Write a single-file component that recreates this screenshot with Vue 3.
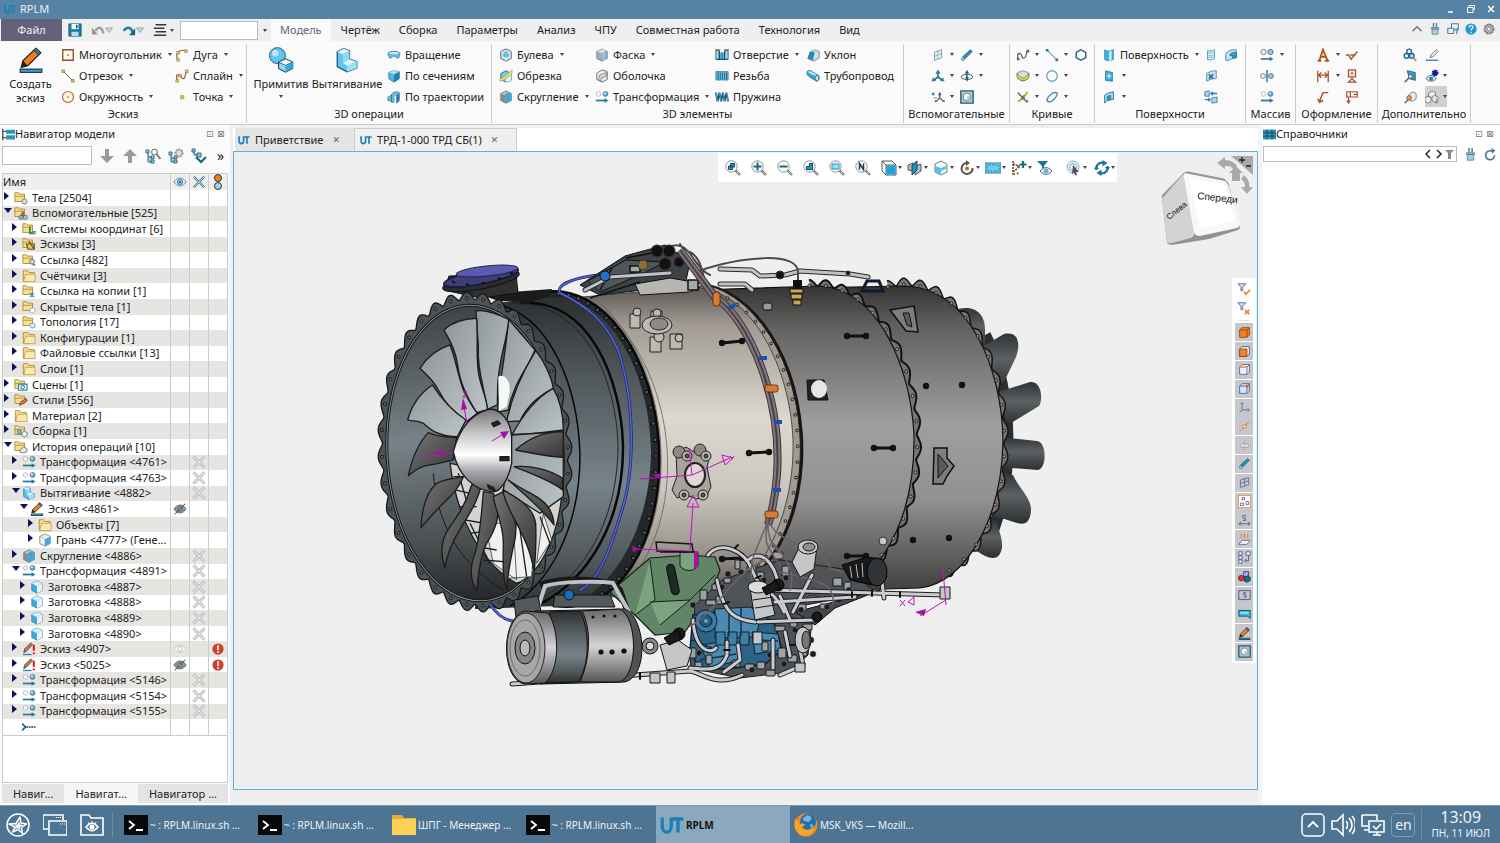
<script setup>
import { ref } from 'vue'

const menuTabs = ['Модель', 'Чертёж', 'Сборка', 'Параметры', 'Анализ', 'ЧПУ', 'Совместная работа', 'Технология', 'Вид']
const activeMenu = ref('Модель')
const command = ref('')
const treeSearch = ref('')
const refSearch = ref('')

const groups = [
  {
    title: 'Эскиз', size: 'g-sketch',
    big: [{ icon: 'pencil', label: 'Создать эскиз' }],
    cols: [
      [['polygon', 'Многоугольник', 1], ['segment', 'Отрезок', 1], ['circle', 'Окружность', 1]],
      [['arc', 'Дуга', 1], ['spline', 'Сплайн', 1], ['point', 'Точка', 1]]
    ]
  },
  {
    title: '3D операции', size: 'g-ops',
    big: [{ icon: 'primitive', label: 'Примитив', arrow: true }, { icon: 'extrude', label: 'Вытягивание' }],
    cols: [[['revolve', 'Вращение'], ['loft', 'По сечениям'], ['sweep', 'По траектории']]]
  },
  {
    title: '3D элементы', size: 'g-elems',
    cols: [
      [['boolean', 'Булева', 1], ['trim', 'Обрезка'], ['fillet', 'Скругление', 1]],
      [['chamfer', 'Фаска', 1], ['shell', 'Оболочка'], ['transform', 'Трансформация', 1]],
      [['hole', 'Отверстие', 1], ['thread', 'Резьба'], ['spring', 'Пружина']],
      [['draft', 'Уклон'], ['pipe', 'Трубопровод'], null]
    ]
  },
  {
    title: 'Вспомогательные', size: 'g-aux',
    cols: [
      [['plane', '', 1], ['csys', '', 1], ['csys2', '', 1]],
      [['axis', '', 1], ['rotaxis', '', 1], ['boxframe', '']]
    ]
  },
  {
    title: 'Кривые', size: 'g-curves',
    cols: [
      [['curve', '', 1], ['envelope', '', 1], ['cross', '', 1]],
      [['line', '', 1], ['circ', '', 1], ['ellipse', '', 1]],
      [['hexagon', ''], null, null]
    ]
  },
  {
    title: 'Поверхности', size: 'g-surf',
    cols: [
      [['surface', 'Поверхность', 1], ['surfplus', '', 1], ['surfoff', '', 1]],
      [['sheet', ''], ['sheetx', ''], ['swap', '']],
      [['sheets', ''], null, null]
    ]
  },
  { title: 'Массив', size: 'g-array', cols: [[['array', '', 1], ['mirror', ''], ['transform', '']]] },
  {
    title: 'Оформление', size: 'g-annot',
    cols: [
      [['letter', '', 1], ['dimension', '', 1], ['leader', '']],
      [['rough', ''], ['datum', ''], ['frame', '']]
    ]
  },
  {
    title: 'Дополнительно', size: 'g-extra',
    cols: [
      [['measure', ''], ['probe', ''], ['probebox', '']],
      [['pen', ''], ['eyegear', '', 1], ['cubes', '', 1, 1]]
    ]
  }
]

// [level, state, icon, text, eye, cross, alert]
const tree = [
  [0, 'closed', 'f-body', 'Тела [2504]'],
  [0, 'open', 'f-aux', 'Вспомогательные [525]'],
  [1, 'closed', 'f-csys', 'Системы координат [6]'],
  [1, 'closed', 'f-sketch', 'Эскизы [3]'],
  [1, 'closed', 'f-link', 'Ссылка [482]'],
  [1, 'closed', 'folder', 'Счётчики [3]'],
  [1, 'closed', 'f-copy', 'Ссылка на копии [1]'],
  [1, 'closed', 'f-hidden', 'Скрытые тела [1]'],
  [1, 'closed', 'f-topo', 'Топология [17]'],
  [1, 'closed', 'folder', 'Конфигурации [1]'],
  [1, 'closed', 'folder', 'Файловые ссылки [13]'],
  [1, 'closed', 'folder', 'Слои [1]'],
  [0, 'closed', 'f-scene', 'Сцены [1]'],
  [0, 'closed', 'f-style', 'Стили [556]'],
  [0, 'closed', 'folder', 'Материал [2]'],
  [0, 'closed', 'f-asm', 'Сборка [1]'],
  [0, 'open', 'f-hist', 'История операций [10]'],
  [1, 'closed', 'transform', 'Трансформация <4761>', '', true],
  [1, 'closed', 'transform', 'Трансформация <4763>', '', true],
  [1, 'open', 'extrude', 'Вытягивание <4882>', '', true],
  [2, 'open', 'pencil', 'Эскиз <4861>', 'eye-off'],
  [3, 'closed', 'folder', 'Объекты [7]'],
  [3, 'closed', 'face', 'Грань <4777> (Гене...'],
  [1, 'closed', 'fillet', 'Скругление <4886>', '', true],
  [1, 'open', 'transform', 'Трансформация <4891>', '', true],
  [2, 'closed', 'cube', 'Заготовка <4887>', '', true],
  [2, 'closed', 'cube', 'Заготовка <4888>', '', true],
  [2, 'closed', 'cube', 'Заготовка <4889>', '', true],
  [2, 'closed', 'cube', 'Заготовка <4890>', '', true],
  [1, 'closed', 'pencil-err', 'Эскиз <4907>', 'eye-pale', false, true],
  [1, 'closed', 'pencil-err', 'Эскиз <5025>', 'eye-off', false, true],
  [1, 'closed', 'transform', 'Трансформация <5146>', '', true],
  [1, 'closed', 'transform', 'Трансформация <5154>', '', true],
  [1, 'closed', 'transform', 'Трансформация <5155>', '', true],
  [1, '', 'tail', '']
]

const viewTools = [
  ['z-all', 0], ['z-in', 0], ['z-out', 0], ['z-part', 0], ['z-rect', 0], ['z-n', 0], ['v-box', 1], ['v-section', 1],
  ['v-shade', 1], ['v-rotate', 1], ['v-select', 1], ['v-graph', 1], ['v-filter', 0], ['v-pick', 2], ['v-sync', 1]
]

const filters = [
  's-body', 's-face', 's-edge', 's-vertex', 's-csys', 's-point', 's-axis', 'axis', 's-plane', 's-group',
  's-dim', 's-proj', 's-array', 's-solids', 's-num', 's-note', 'pencil', 'boxframe'
]

const tasks = [
  ['terminal', '~ : RPLM.linux.sh ...'],
  ['terminal', '~ : RPLM.linux.sh ...'],
  ['files', 'ШПГ - Менеджер ...'],
  ['terminal', '~ : RPLM.linux.sh ...'],
  ['ut', 'RPLM', true],
  ['firefox', 'MSK_VKS — Mozill...']
]

function pointAt (e, deg, k = 1) {
  const t = deg * Math.PI / 180
  const a = e.tilt * Math.PI / 180
  const x = e.rx * k * Math.cos(t)
  const y = e.ry * k * Math.sin(t)
  return [e.cx + x * Math.cos(a) - y * Math.sin(a), e.cy + x * Math.sin(a) + y * Math.cos(a)]
}

// wavy edge of a flange between two angles
function wave (e, from, to, teeth, depth) {
  const pts = []
  for (let d = from; d <= to; d += 0.75) {
    const ph = (d - from) / 360 * teeth * Math.PI
    const k = 1 + depth * (Math.pow(Math.abs(Math.cos(ph)), 1.3) - 0.6)
    pts.push(pointAt(e, d, k).map(v => v.toFixed(1)).join(' '))
  }
  return 'M' + pts.join('L')
}

function bolts (e, from, to, step, k) {
  const out = []
  for (let d = from; d <= to; d += step) out.push(pointAt(e, d, k))
  return out
}

const front = { cx: 475, cy: 452, rx: 95, ry: 157, tilt: -3 }
const second = { cx: 561, cy: 449, rx: 96, ry: 158, tilt: -4 }
const third = { cx: 699, cy: 440, rx: 102, ry: 157, tilt: -4 }
const fourth = { cx: 823, cy: 433, rx: 96, ry: 151, tilt: -4 }
const fifth = { cx: 911, cy: 432, rx: 95, ry: 151, tilt: -4 }

const frontEdge = wave(front, 0, 360, 36, 0.05) + 'Z'
const fourthEdge = wave(fourth, -92, 70, 36, 0.045)
const fifthEdge = wave(fifth, -98, 80, 36, 0.05)
const frontBolts = bolts(front, 0, 355, 10, 0.98)
const secondBolts = bolts(second, -85, 75, 6, 0.985)
const thirdBolts = bolts(third, -85, 60, 6, 0.965)
const fourthBolts = bolts(fourth, -92, 68, 10, 0.98)
const fifthBolts = bolts(fifth, -98, 78, 10, 0.98)

// small fittings between the fuel lines: x, y, width, height
const fittings = [
  [700, 590, 7, 10], [712, 584, 9, 6], [706, 600, 10, 5], [716, 596, 6, 8], [724, 578, 7, 5], [735, 560, 5, 9],
  [747, 566, 9, 5], [757, 572, 7, 7], [782, 566, 7, 10], [773, 552, 10, 7], [797, 604, 9, 7], [808, 596, 10, 5],
  [820, 604, 9, 5], [833, 578, 9, 8], [844, 582, 7, 9], [775, 626, 10, 5], [790, 618, 7, 9], [803, 624, 9, 6],
  [762, 642, 6, 9], [778, 648, 8, 10], [788, 655, 9, 7], [800, 648, 7, 8], [732, 660, 8, 7], [745, 664, 9, 6],
  [757, 662, 8, 7], [766, 670, 9, 6], [688, 648, 8, 10], [695, 662, 7, 7], [682, 654, 7, 8], [706, 655, 6, 9]
]
const dots = [
  [722, 587], [741, 572], [764, 580], [786, 578], [801, 610], [827, 607], [839, 600], [795, 630], [811, 640],
  [770, 655], [784, 664], [752, 670], [699, 653], [676, 664], [728, 574], [849, 590], [813, 654], [693, 605]
]
</script>

<template>
  <svg class="defs" aria-hidden="true">
    <symbol id="pencil" viewBox="0 0 16 16"><path d="M1 14.6h14" stroke="#111" stroke-width="2.6" /><path d="M1.5 14.6h13" stroke="#29a5dc" stroke-width="1.4" /><path d="M2 12.5l1-4L11 .8l3 2.8L6 11.5z" fill="#f27d1c" stroke="#222" stroke-width=".8" /><path d="M2 12.5l1-4 3 3z" fill="#222" /><path d="M9.7 2L11 .8l3 2.8-1.3 1.2z" fill="#258db9" stroke="#222" stroke-width=".6" /></symbol>
    <symbol id="pencil-err" viewBox="0 0 16 16"><path d="M1 14.3h10" stroke="#2f88ad" stroke-width="1.6" /><path d="M2 12l1-4 7-7 2 2-7 7.5z" fill="#d27a45" stroke="#444" /><path d="M13.5 3v7M13.5 12v2" stroke="#e01818" stroke-width="2.4" /></symbol>
    <symbol id="polygon" viewBox="0 0 16 16"><path d="M2 2h12v12H2z" fill="#fff8ed" stroke="#8a4d2b" stroke-width="1.5" /><path d="M7 7h2v2H7z" fill="#92a527" /></symbol>
    <symbol id="segment" viewBox="0 0 16 16"><path d="M2 2l12 12" stroke="#604937" stroke-width="1.1" /><path d="M1 1h3v3H1zM12 12h3v3h-3z" fill="#d7ba59" stroke="#7b6731" stroke-width=".6" /></symbol>
    <symbol id="circle" viewBox="0 0 16 16"><circle cx="8" cy="8" r="6.3" fill="#fff5e8" stroke="#b5683b" stroke-width="1.4" /><path d="M7 7h2v2H7z" fill="#92a527" /></symbol>
    <symbol id="arc" viewBox="0 0 16 16"><path d="M3 13C0 7 4 1 12 3" fill="none" stroke="#99612e" stroke-width="1.4" /><path d="M2 12h3v3H2zM11 2h3v3h-3zM2 4h3v3H2z" fill="#e5cc70" stroke="#7b6731" stroke-width=".6" /></symbol>
    <symbol id="spline" viewBox="0 0 16 16"><path d="M2 13V7h4c2 0 1 5 4 4s0-6 4-8" fill="none" stroke="#99612e" stroke-width="1.4" /><path d="M1 12h3v3H1zM4 6h3v3H4zM12 1h3v3h-3z" fill="#e5cc70" stroke="#7b6731" stroke-width=".6" /></symbol>
    <symbol id="point" viewBox="0 0 16 16"><path d="M6.500 6.500h3.500v3.500H6.500z" fill="#d6cf6d" stroke="#8f8a36" stroke-width=".8" /></symbol>
    <symbol id="primitive" viewBox="0 0 16 16"><circle cx="5.800" cy="5.300" r="4.900" fill="#5ec5f2" stroke="#265a70" stroke-width=".6" /><circle cx="4.500" cy="3.800" r="2" fill="#bfe9fb" /><path d="M6.500 9.300l4.300-2 4.400 2v4l-4.400 2.200-4.300-2.200z" fill="#8ed8f8" stroke="#222" stroke-width=".6" /><path d="M6.500 9.300l4.300 2 4.400-2-4.400-2z" fill="#eaf8fe" stroke="#222" stroke-width=".4" /><path d="M10.800 11.300v4.200l4.400-2.200v-4z" fill="#32a7e0" /></symbol>
    <symbol id="extrude" viewBox="0 0 16 16"><path d="M2 3l4-2 3.500 1.300v5.200l4.500 1.500v4L8 15.300 2 12z" fill="#5ec5f2" stroke="#265a70" stroke-width=".8" /><path d="M2 3l4-2 3.500 1.300L5.500 4.500z" fill="#dff4fd" /><path d="M5.500 9.800l4-2.300L14 9l-6 2.500z" fill="#dff4fd" /><path d="M5.500 4.500l4-2.200v5.200l-4 2.300z" fill="#8fdaf8" /><path d="M8 11.500L14 9v4l-6 2.300z" fill="#9fdff8" /></symbol>
    <symbol id="revolve" viewBox="0 0 16 16"><path d="M1 6c2-3 12-3 14 0l-1.500 5c-1 1-3 1-3-1-2-1-3-1-5 0 0 2-2 2-3 1z" fill="#5bbfe9" stroke="#4a6e80" stroke-width=".8" /><path d="M2 6c2-2 10-2 12 0-3 1.500-9 1.500-12 0z" fill="#c9ecfa" /></symbol>
    <symbol id="loft" viewBox="0 0 16 16"><path d="M2 4l6-2 6 1v8l-6 4-6-4z" fill="#4fb7e6" stroke="#34667c" stroke-width=".8" /><path d="M8 6v9l6-4V3z" fill="#1b82b5" /><path d="M2 4l6-2 6 1-6 3z" fill="#b6e3f6" /></symbol>
    <symbol id="sweep" viewBox="0 0 16 16"><path d="M1 8l4-2v7l-4-1zM5 6c0-4 8-5 9-3v9l-3 3V6c-1-1-3 0-3 1v7H5z" fill="#67c5ec" stroke="#4a6e80" stroke-width=".8" /><path d="M11 6l3-3v9l-3 3z" fill="#247fae" /></symbol>
    <symbol id="cube" viewBox="0 0 16 16"><path d="M2 4l6-3 6 3v8l-6 3-6-3z" fill="#37adea" stroke="#55707e" stroke-width=".8" /><path d="M8 7l6-3v8l-6 3z" fill="#e5f6fd" /><path d="M2 4l6-3 6 3-6 3z" fill="#d9f1fb" /></symbol>
    <symbol id="face" viewBox="0 0 16 16"><path d="M2 4l6-3 6 3v8l-6 3-6-3z" fill="#f1f1f1" stroke="#666" stroke-width=".8" /><path d="M8 7l6-3v8l-6 3z" fill="#37adea" /><path d="M2 4l6 3v8" fill="none" stroke="#888" stroke-width=".5" /></symbol>
    <symbol id="boolean" viewBox="0 0 16 16"><path d="M2 4l6-3 6 3v8l-6 3-6-3z" fill="#d8e3e8" stroke="#556" /><path d="M5 5.500l3-1.500 3 1.500v4L8 8l-3 1.500zM5 9.500L8 8l3 1.500L8 11z" fill="#37adea" /><path d="M2 4l6 3 6-3M8 7v8" fill="none" stroke="#fff" stroke-width=".6" /></symbol>
    <symbol id="trim" viewBox="0 0 16 16"><path d="M2 5l6-3 6 3v8l-6 2-6-3z" fill="#6ac9ee" stroke="#3a6e80" /><path d="M8 7l6-2v8l-6 2z" fill="#dfeff4" /><path d="M1 11C6 10 10 5 15 1v4C11 9 6 13 1 14z" fill="#e8da72" stroke="#9b8b33" stroke-width=".5" /></symbol>
    <symbol id="fillet" viewBox="0 0 16 16"><path d="M2 4l6-3 6 3v8l-6 3-6-3z" fill="#bdc4c8" stroke="#555" stroke-width=".8" /><path d="M6 6c2-3 5-3 8-2v8l-6 3c0-5 0-7-2-9z" fill="#39a8df" /><path d="M2 4l5 2.500 1 8.500-6-3z" fill="#848c91" /></symbol>
    <symbol id="chamfer" viewBox="0 0 16 16"><path d="M2 4l6-3 6 3v8l-6 3-6-3z" fill="#a3adb8" stroke="#666" stroke-width=".8" /><path d="M4 3l7 1 2 9-5 2V7z" fill="#8cc0dd" /><path d="M2 4l6-3 5 2-5 3z" fill="#d5dbe2" /></symbol>
    <symbol id="shell" viewBox="0 0 16 16"><path d="M2 5l6-4 6 2v9l-6 3-6-3z" fill="#eee" stroke="#666" /><path d="M5 7l8-3v4L7 11v3l-3-2z" fill="#ccd5d8" stroke="#666" stroke-width=".7" /></symbol>
    <symbol id="transform" viewBox="0 0 16 16"><circle cx="4" cy="4.500" r="2.600" fill="#fafafa" stroke="#aaa" stroke-width=".8" /><circle cx="12" cy="4.500" r="2.800" fill="#49b4e4" stroke="#4d6977" stroke-width=".8" /><circle cx="11.300" cy="3.800" r="1.100" fill="#def3fc" /><path d="M1 12h11" stroke="#257b9d" stroke-width="2" /><path d="M11 9.500l4.500 2.500-4.500 2.500z" fill="#257b9d" /></symbol>
    <symbol id="hole" viewBox="0 0 16 16"><path d="M1 3h14v10H1z" fill="#9edaf0" stroke="#355f70" /><path d="M5 2h6v9H5z" fill="#fff" /><path d="M5 3v10M11 3v10" stroke="#244d5f" stroke-width="1.500" /><path d="M6 5h4v8H6z" fill="#2a9cd0" /><path d="M0 2h6M10 2h6M1 13h14" stroke="#333" stroke-width=".8" /></symbol>
    <symbol id="thread" viewBox="0 0 16 16"><path d="M1 3h14v9l-1 1-1.500-1-1.500 1-1.500-1L8 13l-1.500-1L5 13l-1.500-1L2 13l-1-1z" fill="#61c3e8" stroke="#2f5b6d" stroke-width=".8" /><path d="M3.500 4v8M6 4v8M8.500 4v8M11 4v8M13.300 4v8" stroke="#225a72" /></symbol>
    <symbol id="spring" viewBox="0 0 16 16"><path d="M1 3l2 10L5 3l2 10L9 3l2 10 2-10 2 10" fill="none" stroke="#19586f" stroke-width="2.200" /><path d="M1 3l2 10M5 3l2 10M9 3l2 10M13 3l2 10" stroke="#64c2e1" stroke-width=".8" /></symbol>
    <symbol id="draft" viewBox="0 0 16 16"><path d="M2 12L5 4l6-2 4 2v7l-6 4z" fill="#d8e0e5" stroke="#555" stroke-width=".8" /><path d="M2 12l3-8h5l-2 10z" fill="#1c8ac0" /><path d="M5 4l6-2 4 2-5 1z" fill="#9bd8f2" /></symbol>
    <symbol id="pipe" viewBox="0 0 16 16"><path d="M1 4c0-3 4-3 6-1l7 4c2 2 1 7-2 7L4 9C2 8 1 6 1 4z" fill="#2da4dc" stroke="#3b667a" stroke-width=".8" /><path d="M3 3l8 4" stroke="#c7ecfa" stroke-width="2" /><ellipse cx="12.500" cy="10.500" rx="2" ry="3" fill="#bfe7f5" stroke="#3b667a" stroke-width=".8" /></symbol>
    <symbol id="plane" viewBox="0 0 16 16"><path d="M4 5l8-3v9l-8 3z" fill="#eff8fb" stroke="#64838f" stroke-width=".9" /><path d="M8 3v9M4 9.500l8-3" stroke="#64a9c2" stroke-width=".9" /></symbol>
    <symbol id="axis" viewBox="0 0 16 16"><path d="M3 13l1-4 8-7 2 2-8 8z" fill="#1f92c3" stroke="#1d4e62" stroke-width=".8" /><circle cx="3.500" cy="12.500" r="1.800" fill="#93d8ef" stroke="#1d4e62" stroke-width=".6" /></symbol>
    <symbol id="csys" viewBox="0 0 16 16"><path d="M8 9V3M8 9l-5 4M8 9l5 4" stroke="#205f79" stroke-width="1.600" /><path d="M5.500 5L8 1l2.500 4zM1 14l1.500-4 3 3zM15 14l-1.500-4-3 3z" fill="#2787aa" stroke="#205f79" stroke-width=".5" /></symbol>
    <symbol id="csys2" viewBox="0 0 16 16"><path d="M10 9V4M10 9l-4 4M10 9l4 4" stroke="#555" stroke-width="1.500" /><path d="M8 6l2-4 2 4zM4 14l1-3 2 2zM16 14l-1-3-2 2z" fill="#555" /><path d="M1 3h3v3H1z" fill="#3b94b2" /><path d="M3 9h4" stroke="#3b94b2" /></symbol>
    <symbol id="rotaxis" viewBox="0 0 16 16"><ellipse cx="8" cy="9" rx="6.500" ry="3" fill="none" stroke="#555" stroke-width="1.100" /><path d="M8 14V3" stroke="#216983" stroke-width="1.600" /><path d="M5.500 5L8 1l2.500 4z" fill="#216983" /><path d="M6.500 9h3v3h-3z" fill="#216983" /></symbol>
    <symbol id="boxframe" viewBox="0 0 16 16"><path d="M1 1h14v14H1z" fill="#a5cadb" stroke="#2f5b6d" stroke-width="1.600" /><path d="M4 5.500L8 3.500l4 2v5l-4 2-4-2z" fill="#fff" stroke="#555" stroke-width=".8" /><path d="M8 8l4-2.500v5l-4 2z" fill="#b7c6cd" /></symbol>
    <symbol id="curve" viewBox="0 0 16 16"><path d="M2 13V7c6-4 3 7 8 4 3-2 0-6 4-8" fill="none" stroke="#555" stroke-width="1.300" /><path d="M1 11h3v3H1zM12 2h3v3h-3z" fill="#2b7898" /><path d="M2 6h2v2H2z" fill="#777" /></symbol>
    <symbol id="envelope" viewBox="0 0 16 16"><path d="M2 4l6-2 6 2v7l-6 3-6-3z" fill="#ddd" stroke="#777" stroke-width=".8" /><path d="M1 5l4 4c2 2 4 2 6 0l4-4v4l-4 4H5L1 9z" fill="#d9d567" stroke="#6b6a24" stroke-width=".8" /></symbol>
    <symbol id="cross" viewBox="0 0 16 16"><path d="M2 3l11 11" stroke="#333" stroke-width="1.200" /><path d="M2 13c5 0 4-6 8-7 2-1 2-2 3-4" fill="none" stroke="#9ba529" stroke-width="1.800" /><path d="M6 7h4v4H6z" fill="#4e7f3b" /><path d="M11 12h3v2h-3z" fill="#2b7898" /></symbol>
    <symbol id="line" viewBox="0 0 16 16"><path d="M2 2l12 12" stroke="#4a8ba2" stroke-width="1.200" /><path d="M1 1h3v3H1zM12 12h3v3h-3z" fill="#2b7898" /></symbol>
    <symbol id="circ" viewBox="0 0 16 16"><circle cx="8" cy="8" r="6" fill="none" stroke="#68a9bf" stroke-width="1.500" /></symbol>
    <symbol id="ellipse" viewBox="0 0 16 16"><path d="M3 13c-3-3 6-12 10-10s-6 13-10 10z" fill="none" stroke="#3f86a0" stroke-width="1.500" /></symbol>
    <symbol id="hexagon" viewBox="0 0 16 16"><path d="M8 2l5.500 3v6L8 14l-5.500-3V5z" fill="none" stroke="#1c617c" stroke-width="1.600" /></symbol>
    <symbol id="surface" viewBox="0 0 16 16"><path d="M3 2c3 2 6 2 10 0v11c-4 2-7 2-10 0z" fill="#39b5e8" stroke="#3c7890" stroke-width=".8" /><path d="M8 4l3-1v11l-3 1z" fill="#bfeaf9" /></symbol>
    <symbol id="surfplus" viewBox="0 0 16 16"><path d="M4 2l8 2v10l-8-1z" fill="#35aadd" stroke="#2c6c87" stroke-width=".8" /><path d="M8 5v6M5 8h6" stroke="#fff" /></symbol>
    <symbol id="surfoff" viewBox="0 0 16 16"><path d="M3 6c3-3 6-3 10-4v9c-3 0-7 0-10 4z" fill="#a2daf0" stroke="#2c6c87" /><path d="M6 7l4-1v5l-4 1z" fill="#2a99cc" stroke="#2c6c87" stroke-width=".7" /></symbol>
    <symbol id="sheet" viewBox="0 0 16 16"><path d="M4 3c3 1 5 0 8-1v10c-3 2-5 2-8 1z" fill="#d0ecf6" stroke="#5492ab" /><path d="M5 6l6-1M5 9l6-1M5 11l6-1" stroke="#5492ab" stroke-width=".6" /></symbol>
    <symbol id="sheets" viewBox="0 0 16 16"><path d="M2 7c2-4 6-5 12-5v9c-3 0-5 1-8 3H2z" fill="#bde5f4" stroke="#3d7f99" /><path d="M7 7c2-2 4-2 7-2v6l-4 1V9H7z" fill="#27a0d3" stroke="#204f61" stroke-width=".7" /></symbol>
    <symbol id="sheetx" viewBox="0 0 16 16"><path d="M3 5c4-2 6-3 11-3v9c-5 0-7 1-11 3z" fill="#bde5f4" stroke="#4f8ca3" /><path d="M5.500 6l5 5M10.500 6l-5 5" stroke="#276c8b" stroke-width="1.800" /></symbol>
    <symbol id="swap" viewBox="0 0 16 16"><path d="M1 2l5-1v6H1zM9 9l6-1v6l-6 1z" fill="#a9daec" stroke="#397c98" /><path d="M15 4H9M10 2L8 4l2 2M1 11h5M5 9l2 2-2 2" fill="none" stroke="#1e83b4" stroke-width="1.500" /></symbol>
    <symbol id="array" viewBox="0 0 16 16"><circle cx="4" cy="4.500" r="3" fill="#ececec" stroke="#777" /><circle cx="12" cy="4.500" r="3" fill="#8ed0ec" stroke="#4d6977" /><path d="M1 12.500h11" stroke="#2b86ad" stroke-width="2" /><path d="M11 10l4.500 2.500-4.500 2.500z" fill="#2b86ad" /></symbol>
    <symbol id="mirror" viewBox="0 0 16 16"><path d="M8 1v14" stroke="#286e8b" stroke-width="1.600" /><circle cx="3.500" cy="8" r="2.800" fill="#eee" stroke="#777" /><circle cx="12.500" cy="8" r="2.800" fill="#8ed0ec" stroke="#4d6977" /></symbol>
    <symbol id="letter" viewBox="0 0 16 16"><path d="M2 14.500h4M10 14.500h5M4 14L8 2l5 12M5.500 10h6" fill="none" stroke="#b0561d" stroke-width="2.200" /></symbol>
    <symbol id="dimension" viewBox="0 0 16 16"><path d="M2 2v13M14 2v13M3 7h10M6 4L3 7l3 3M10 4l3 3-3 3" fill="none" stroke="#a5532a" stroke-width="1.500" /></symbol>
    <symbol id="leader" viewBox="0 0 16 16"><path d="M4 13L8 3h6M2 10l2 4 4-2" fill="none" stroke="#a5532a" stroke-width="1.700" /></symbol>
    <symbol id="rough" viewBox="0 0 16 16"><path d="M1 8h3l3 5 7-9M6 8h6" fill="none" stroke="#a5532a" stroke-width="1.600" /></symbol>
    <symbol id="datum" viewBox="0 0 16 16"><path d="M4 1h8v8H4zM8 9v3M4 15l4-4 4 4z" fill="none" stroke="#a5532a" stroke-width="1.500" /><path d="M6.500 7L8 3l1.500 4" fill="none" stroke="#a5532a" /></symbol>
    <symbol id="frame" viewBox="0 0 16 16"><path d="M2 2h12v6H2zM6 2v6M10 5h4M4 8v6M2 12l2 3 2-3" fill="none" stroke="#a5532a" stroke-width="1.400" /></symbol>
    <symbol id="measure" viewBox="0 0 16 16"><circle cx="7" cy="4" r="2.700" fill="none" stroke="#1d6b88" stroke-width="1.600" /><circle cx="4" cy="9" r="2.700" fill="none" stroke="#1d6b88" stroke-width="1.600" /><circle cx="10" cy="9" r="2.700" fill="#bfe4f1" stroke="#1d6b88" stroke-width="1.600" /><path d="M12 11l3 4" stroke="#999" stroke-width="2" /></symbol>
    <symbol id="pen" viewBox="0 0 16 16"><path d="M1 14h14" stroke="#37839f" stroke-width="1.500" /><path d="M6 11l1-3 6-6 2 2-6 6z" fill="#f5f5f5" stroke="#666" /></symbol>
    <symbol id="probe" viewBox="0 0 16 16"><path d="M5 2l9 2v9l-7-2z" fill="#2f9dcc" stroke="#2d5d71" /><path d="M2 15l6-6" stroke="#777" stroke-width="2" /><circle cx="8.500" cy="8.500" r="2.200" fill="#d9eef5" stroke="#555" /></symbol>
    <symbol id="probebox" viewBox="0 0 16 16"><path d="M7 5l4-3 4 2v6l-4 3-4-2z" fill="#eee" stroke="#777" /><path d="M2 15l5-5" stroke="#777" stroke-width="2" /><circle cx="7" cy="9" r="2.600" fill="#e79c62" stroke="#8f5225" /></symbol>
    <symbol id="eyegear" viewBox="0 0 16 16"><path d="M1 11c3-5 9-5 12 0-3 4-9 4-12 0z" fill="#cfe4ee" stroke="#50707e" /><circle cx="7" cy="11" r="2.300" fill="#3c80a0" /><circle cx="11.500" cy="4.500" r="3" fill="#1717a5" stroke="#1717a5" stroke-width="2" stroke-dasharray="1.500 1" /></symbol>
    <symbol id="cubes" viewBox="0 0 16 16"><path d="M4 4l4-3 4 2v4l-4 2-4-2zM0 9l3.500-2L7 9v4l-3.500 2L0 13z" fill="#eee" stroke="#777" /><path d="M8 8l3-2 4 2v4l-4 2-3-2z" fill="#e5e5e5" stroke="#777" /><path d="M13 10v5M11 13l2 2 2-2" fill="none" stroke="#71a6b8" stroke-width="1.300" /></symbol>

    <symbol id="folder" viewBox="0 0 16 16"><path d="M1.500 14V2h5l1.500 2h6v10z" fill="#f6df94" stroke="#a98831" /><path d="M4 6h11v8.500H2z" fill="#fbe9ab" stroke="#b09140" stroke-width=".8" /></symbol>
    <symbol id="fbase" viewBox="0 0 16 16"><path d="M1 12V2h4l1 1.500h6V12z" fill="#f6df94" stroke="#a98831" /><path d="M1 6h11" stroke="#a98831" stroke-width=".9" /></symbol>
    <symbol id="f-body" viewBox="0 0 16 16"><use href="#fbase" /><circle cx="12" cy="12" r="3" fill="#ddd" stroke="#777" /></symbol>
    <symbol id="f-aux" viewBox="0 0 16 16"><use href="#fbase" /><path d="M7 12l3-6 3 6z" fill="#d26221" stroke="#6e3d1a" stroke-width=".6" /><circle cx="8" cy="13" r="2.500" fill="#67bfe1" stroke="#356" stroke-width=".6" /><path d="M11 11h4v4h-4z" fill="#b9cbd3" stroke="#555" stroke-width=".7" /></symbol>
    <symbol id="f-csys" viewBox="0 0 16 16"><use href="#fbase" /><path d="M9 5v8h5" fill="none" stroke="#2e8b3c" stroke-width="2" /><path d="M12 11h3v3" fill="none" stroke="#2f88ad" stroke-width="1.300" /></symbol>
    <symbol id="f-sketch" viewBox="0 0 16 16"><use href="#fbase" /><path d="M5 8h9v6H7zM8 5l6 9" fill="#e6cb56" stroke="#65541c" stroke-width="1.400" /></symbol>
    <symbol id="f-link" viewBox="0 0 16 16"><use href="#fbase" /><circle cx="11.500" cy="10" r="2.800" fill="#ccd7dc" stroke="#666" /><path d="M12 13l3 1" stroke="#36809b" stroke-width="1.800" /></symbol>
    <symbol id="f-copy" viewBox="0 0 16 16"><use href="#fbase" /><path d="M9 10l5 5M14 10l-5 5M11.500 10v5" stroke="#3f8fae" stroke-width="1.200" /></symbol>
    <symbol id="f-hidden" viewBox="0 0 16 16"><use href="#fbase" /><circle cx="12" cy="12" r="2.900" fill="#fff" stroke="#999" stroke-width=".8" /></symbol>
    <symbol id="f-topo" viewBox="0 0 16 16"><use href="#fbase" /><circle cx="12" cy="12" r="2.900" fill="#d6effa" stroke="#5295b0" stroke-width=".9" /></symbol>
    <symbol id="f-scene" viewBox="0 0 16 16"><use href="#fbase" /><path d="M5 7h10v7H5z" fill="#d8f1f7" stroke="#2c8298" stroke-width="1.200" /><circle cx="10" cy="10.500" r="2" fill="#fff" stroke="#356" /></symbol>
    <symbol id="f-style" viewBox="0 0 16 16"><use href="#fbase" /><path d="M6 14l2-4 6-4 1 3-6 4z" fill="#dc7a35" stroke="#4b3a2e" stroke-width=".8" /></symbol>
    <symbol id="f-asm" viewBox="0 0 16 16"><use href="#fbase" /><circle cx="6" cy="9" r="2.500" fill="#6cc2e2" stroke="#456" stroke-width=".7" /><path d="M9 10l3-2 3 2v3l-3 2-3-2z" fill="#eee" stroke="#666" stroke-width=".9" /></symbol>
    <symbol id="f-hist" viewBox="0 0 16 16"><use href="#fbase" /><path d="M7 11l4-3 4 2v3l-4 2-4-1z" fill="#e5e5e5" stroke="#777" /></symbol>
    <symbol id="tail" viewBox="0 0 16 16"><path d="M0 4l4 4-4 4" fill="none" stroke="#1d6280" stroke-width="2" /><path d="M5 8h11" stroke="#1d4052" stroke-width="1.600" stroke-dasharray="2 .8" /></symbol>
    <symbol id="eye" viewBox="0 0 16 16"><path d="M1 8c4-6 10-6 14 0-4 6-10 6-14 0z" fill="#d9effa" stroke="#588196" /><circle cx="8" cy="8" r="3" fill="#8ecbe6" stroke="#47798f" /><circle cx="8" cy="8" r="1" fill="#222" /></symbol>
    <symbol id="eye-pale" viewBox="0 0 16 16"><path d="M1 8c4-5 10-5 14 0-4 5-10 5-14 0z" fill="#fafafa" stroke="#bbb" /><circle cx="8" cy="8" r="2.500" fill="none" stroke="#bbb" /></symbol>
    <symbol id="eye-off" viewBox="0 0 16 16"><path d="M1 8c4-6 10-6 14 0-4 6-10 6-14 0z" fill="#8b979d" stroke="#59656a" /><circle cx="8" cy="8" r="2.300" fill="#c4cbce" stroke="#48545a" /><path d="M2 14L14 2" stroke="#48545a" stroke-width="1.200" /></symbol>
    <symbol id="x-blue" viewBox="0 0 16 16"><path d="M1 1l14 14M15 1L1 15" stroke="#577c8e" stroke-width="3" /><path d="M1 1l14 14M15 1L1 15" stroke="#a9d9ec" stroke-width="1.200" /></symbol>
    <symbol id="x-pale" viewBox="0 0 16 16"><path d="M1.500 1.500l13 13M14.500 1.500l-13 13" stroke="#b2b2b2" stroke-width="3.200" /><path d="M1.500 1.500l13 13M14.500 1.500l-13 13" stroke="#efefef" stroke-width="1.300" /></symbol>
    <symbol id="lights" viewBox="0 0 16 16"><circle cx="8" cy="4" r="3.500" fill="#ee8420" stroke="#333" /><circle cx="8" cy="12" r="3.500" fill="#9bd6f0" stroke="#333" /></symbol>
    <symbol id="alert" viewBox="0 0 16 16"><circle cx="8" cy="8" r="7.500" fill="#c8442f" /><path d="M8 3v6.500M8 11v2.300" stroke="#fff" stroke-width="2" /></symbol>
    <symbol id="a-down" viewBox="0 0 16 16"><path d="M6 1h4v7h5l-7 7-7-7h5z" fill="#9a9a9a" /></symbol>
    <symbol id="a-up" viewBox="0 0 16 16"><path d="M6 15h4V8h5L8 1 1 8h5z" fill="#9a9a9a" /></symbol>
    <symbol id="t-find" viewBox="0 0 16 16"><path d="M1 2h3v3H1zM3 5v9h4M3 9h4M6 8h3v3H6zM6 12h3v3H6z" fill="#a9d0de" stroke="#2c6d85" /><circle cx="9.500" cy="4" r="2.900" fill="#fff" stroke="#666" /><path d="M11.500 6l4 5" stroke="#777" stroke-width="1.800" /></symbol>
    <symbol id="t-gear" viewBox="0 0 16 16"><path d="M1 4h3v3H1zM3 7v7h4M3 10h4M6 8h3v3H6zM6 12h3v3H6z" fill="#a9d0de" stroke="#2c6d85" /><circle cx="11" cy="5" r="3.500" fill="#ddd" stroke="#888" stroke-width="2" stroke-dasharray="1.600 1" /></symbol>
    <symbol id="t-tree" viewBox="0 0 16 16"><path d="M1 1h3v3H1zM3 4v3h4M6 5h4v4H6z" fill="#8cc2d5" stroke="#2c6d85" /><path d="M5 9l5 5 5-5" fill="none" stroke="#1d6580" stroke-width="2.200" /></symbol>
    <symbol id="panel" viewBox="0 0 16 16"><path d="M1 1v14M1 4h4M1 12h4" stroke="#333" stroke-width="1.400" /><path d="M5 2h11v5H5zM5 9h11v5H5z" fill="#2e92b8" /></symbol>
    <symbol id="grid" viewBox="0 0 16 16"><path d="M0 2h16v12H0z" fill="#2b94bd" /><path d="M0 6h16M0 10h16M5 2v12M11 2v12" stroke="#173e50" /></symbol>

    <symbol id="save" viewBox="0 0 16 16"><path d="M1 1h14v14H1z" fill="#1c7ca8" stroke="#195a78" /><path d="M4 1h8v6H4z" fill="#fff" /><path d="M9 2h2v4H9z" fill="#195a78" /><path d="M4 10h8v5H4z" fill="#b9dcea" /></symbol>
    <symbol id="undo" viewBox="0 0 16 16"><path d="M14 12C13 4 8 4 5 9" fill="none" stroke="#999" stroke-width="2.500" /><path d="M1 5v8h7z" fill="#999" /></symbol>
    <symbol id="redo" viewBox="0 0 16 16"><path d="M2 9c3-5 8-5 10 1" fill="none" stroke="#247ea2" stroke-width="2.800" /><path d="M15 6v8H8z" fill="#1d5e7b" /></symbol>
    <symbol id="lines" viewBox="0 0 16 16"><path d="M3 2h12M1 6h12M3 10h12M1 14h14" stroke="#2d3c43" stroke-width="1.500" /></symbol>
    <symbol id="tri" viewBox="0 0 16 16"><path d="M1 4h14l-7 9z" fill="#c9dce5" stroke="#8fa9b5" stroke-width="2" /></symbol>
    <symbol id="chev-up" viewBox="0 0 16 16"><path d="M2 11l6-6 6 6" fill="none" stroke="#777" stroke-width="2" /></symbol>
    <symbol id="plug" viewBox="0 0 16 16"><path d="M6 0v6M10 0v6" stroke="#5e8b9c" stroke-width="2" /><path d="M3 6h10v2H3zM4 8h8v7H4z" fill="#a5cfdf" stroke="#55808f" /></symbol>
    <symbol id="screens" viewBox="0 0 16 16"><path d="M6 1h9v8H6z" fill="#eef6fa" stroke="#446a82" stroke-width="1.200" /><path d="M1 7h8v7H1z" fill="#e2f0f7" stroke="#446a82" stroke-width="1.200" /><path d="M11 8h4l-2 3v4" fill="none" stroke="#3a8fae" stroke-width="1.500" /></symbol>
    <symbol id="help" viewBox="0 0 16 16"><circle cx="8" cy="8" r="7.500" fill="#2098cf" /><path d="M5.500 6c0-4 5-3 5-.5C10.500 8 8 7.500 8 10M8 11.500v2" fill="none" stroke="#fff" stroke-width="1.600" /></symbol>
    <symbol id="gear" viewBox="0 0 16 16"><circle cx="8" cy="8" r="6" fill="#bbb" stroke="#777" stroke-width="2.500" stroke-dasharray="2.700 .8" /><circle cx="8" cy="8" r="2.500" fill="#f4f4f4" stroke="#777" /></symbol>
    <symbol id="refresh" viewBox="0 0 16 16"><path d="M13 9a5.500 5.500 0 1 1-3-5" fill="none" stroke="#457b90" stroke-width="2" /><path d="M9 0l5 3-4 4z" fill="#457b90" /></symbol>

    <symbol id="lens" viewBox="0 0 16 16"><path d="M10 10l5 5" stroke="#777" stroke-width="2.400" /><circle cx="6.500" cy="6.500" r="5.700" fill="#f7f9fa" stroke="#888" stroke-width=".9" /><path d="M11.500 11.500l3 3" stroke="#ddd" stroke-width=".8" /></symbol>
    <symbol id="z-all" viewBox="0 0 16 16"><use href="#lens" /><path d="M5.500 3.500h4v3.500h-4zM3.500 6h4v3.500h-4z" fill="#2795c4" stroke="#154d64" /></symbol>
    <symbol id="z-in" viewBox="0 0 16 16"><use href="#lens" /><path d="M6.500 2.500v8M2.500 6.500h8" stroke="#196b8c" stroke-width="2" /></symbol>
    <symbol id="z-out" viewBox="0 0 16 16"><use href="#lens" /><path d="M2.500 6.500h8" stroke="#196b8c" stroke-width="2" /></symbol>
    <symbol id="z-part" viewBox="0 0 16 16"><use href="#lens" /><path d="M3.500 9.500V6.500h3v-3h3v6z" fill="#2795c4" stroke="#154d64" /></symbol>
    <symbol id="z-rect" viewBox="0 0 16 16"><use href="#lens" /><path d="M3 4h7v5H3z" fill="#9bdff8" stroke="#2795c4" /></symbol>
    <symbol id="z-n" viewBox="0 0 16 16"><use href="#lens" /><path d="M4.500 9.500v-6l4 6v-6" fill="none" stroke="#1d3c49" stroke-width="1.500" /></symbol>
    <symbol id="v-box" viewBox="0 0 16 16"><path d="M1 1h10l4 4v10H5l-4-4zM1 1l4 4h10M5 5v10" fill="#fff" stroke="#555" /><path d="M5.500 5.500h9v9h-9z" fill="#1aa3de" /></symbol>
    <symbol id="v-section" viewBox="0 0 16 16"><path d="M1 5l5-2v8l-5-1zM8 6l6-2v7l-6 4z" fill="#bbb" stroke="#555" /><path d="M5 5l5-4v9l-5 5z" fill="#2390bd" stroke="#184b60" /></symbol>
    <symbol id="v-shade" viewBox="0 0 16 16"><path d="M2 4l6-3 6 3v8l-6 3-6-3z" fill="#f5fbfd" stroke="#777" /><path d="M2 6l6 2v7l-6-3zM8 8l5-2v3L8 11z" fill="#59c0ea" /></symbol>
    <symbol id="v-rotate" viewBox="0 0 16 16"><path d="M8 3a5.500 5.500 0 1 0 5.500 5" fill="none" stroke="#555" stroke-width="2" /><path d="M7 0l4 3-4 3z" fill="#555" /><circle cx="8" cy="8.500" r="2" fill="#a5712c" /></symbol>
    <symbol id="v-select" viewBox="0 0 16 16"><path d="M0 3h16v10H0z" fill="#68cef3" stroke="#347d98" /><path d="M2 5h12v6H2z" fill="none" stroke="#216b86" stroke-width=".8" stroke-dasharray="1.500 1" /></symbol>
    <symbol id="v-graph" viewBox="0 0 16 16"><path d="M2 1v14M2 4l6 2M2 12l6-5M6 14l2-2" stroke="#5e4c35" stroke-dasharray="2 1" stroke-width="1.600" /><path d="M6 5h3v3H6zM1 13h3v2H1z" fill="#a5712c" /><path d="M12 1v7M8.500 4.500h7" stroke="#1b6b8b" stroke-width="2.200" /></symbol>
    <symbol id="v-filter" viewBox="0 0 16 16"><path d="M0 1h11L7 6v5H5V6z" fill="#1e7397" /><path d="M3 11c4-5 9-4 12 0-4 5-9 4-12 0z" fill="#e8f5fa" stroke="#486f80" /><circle cx="9" cy="11" r="2.500" fill="#66b5d3" /></symbol>
    <symbol id="v-pick" viewBox="0 0 16 16"><circle cx="7" cy="7" r="6" fill="#e5f2f6" stroke="#86b0c0" /><circle cx="7" cy="7" r="3.500" fill="none" stroke="#86b0c0" /><path d="M7 5l6 7-3 0 1 3-2 .5-1-3-2 2z" fill="#555" /></symbol>
    <symbol id="v-sync" viewBox="0 0 16 16"><path d="M2.500 10A5.700 5.700 0 0 1 9 2.800M13.500 6A5.700 5.700 0 0 1 7 13.200" fill="none" stroke="#1c7399" stroke-width="2.200" /><path d="M8.500 0l5 3-5 3.500zM7.500 16l-5-3 5-3.500z" fill="#1c7399" /><path d="M0 9h5l-2.500-3.500zM16 7h-5l2.500 3.500z" fill="#1c7399" /></symbol>

    <symbol id="s-ok" viewBox="0 0 16 16"><path d="M1 2h9L6.500 6v4h-2V6z" fill="#d3dcf1" stroke="#5267a5" /><path d="M8 11l2 3 5-5" fill="none" stroke="#e88522" stroke-width="2" /></symbol>
    <symbol id="s-no" viewBox="0 0 16 16"><path d="M1 2h9L6.500 6v4h-2V6z" fill="#d3dcf1" stroke="#5267a5" /><path d="M9 10l5 5M14 10l-5 5" stroke="#e88522" stroke-width="2" /></symbol>
    <symbol id="s-body" viewBox="0 0 16 16"><path d="M2 5l3-3h9v9l-3 3H2z" fill="#f5821f" stroke="#923f0b" /><path d="M2 5h9v9M11 5l3-3" fill="none" stroke="#923f0b" /></symbol>
    <symbol id="s-face" viewBox="0 0 16 16"><path d="M2 5l3-3h9v9l-3 3H2z" fill="#edf2fc" stroke="#3d4d88" /><path d="M2 5h9v9H2z" fill="#f5821f" stroke="#923f0b" /></symbol>
    <symbol id="s-edge" viewBox="0 0 16 16"><path d="M2 5l3-3h9v9l-3 3H2zM11 5l3-3M11 5v9" fill="#edf2fc" stroke="#4a5a9a" /><path d="M2 5h9" stroke="#e88522" stroke-width="1.600" /></symbol>
    <symbol id="s-vertex" viewBox="0 0 16 16"><path d="M2 5l3-3h9v9l-3 3H2zM2 5h9l3-3M11 5v9" fill="#d6e4fa" stroke="#4a5a9a" /><path d="M10 4h3v3h-3z" fill="#e05a22" /></symbol>
    <symbol id="s-csys" viewBox="0 0 16 16"><path d="M5 11V2M5 11h9M5 11l-3 3M3 4l2-2 2 2M12 9l2 2-2 2" fill="none" stroke="#68759f" stroke-width="1.200" /></symbol>
    <symbol id="s-point" viewBox="0 0 16 16"><path d="M2 14l4-4M10 6l4-4" stroke="#68759f" stroke-dasharray="3 1" /><circle cx="8" cy="8" r="2" fill="#fff" stroke="#e88522" stroke-width="1.300" /></symbol>
    <symbol id="s-axis" viewBox="0 0 16 16"><ellipse cx="8" cy="8" rx="5" ry="2.500" fill="#dbe2f4" stroke="#8794bd" /><path d="M8 2v12" stroke="#d5a871" /></symbol>
    <symbol id="s-plane" viewBox="0 0 16 16"><path d="M3 5l10-3v9L3 14zM8 3v9M3 9l10-3" fill="none" stroke="#5d6a98" /></symbol>
    <symbol id="s-group" viewBox="0 0 16 16"><path d="M0 0h16v16H0z" fill="#fff" stroke="#e88522" stroke-width="2" /><path d="M5 3h3v3H5zM3 10h4v3H3zM10 8h3v4h-3z" fill="none" stroke="#4a5a9a" /></symbol>
    <symbol id="s-dim" viewBox="0 0 16 16"><path d="M10 2H6v3h3v3H6M1 12h14M4 10l-3 2 3 2M12 10l3 2-3 2" fill="none" stroke="#50608f" stroke-width="1.100" /></symbol>
    <symbol id="s-proj" viewBox="0 0 16 16"><path d="M4 1v5M8 1v5M12 1v5" stroke="#e88522" stroke-width="1.400" /><path d="M1 14l4-5h10l-4 5z" fill="#f1f4fb" stroke="#50608f" /></symbol>
    <symbol id="s-array" viewBox="0 0 16 16"><path d="M1 1h4v4H1zM1 6h4v4H1zM1 11h4v4H1zM10 1h5v4h-5z" fill="#fff" stroke="#3d4d88" /><path d="M13 6v6H9M10 10l-2 2 2 2" fill="none" stroke="#3d4d88" /></symbol>
    <symbol id="s-solids" viewBox="0 0 16 16"><path d="M7 2h6v6H7z" fill="#a4aaf0" stroke="#26307f" /><circle cx="4" cy="10" r="3.400" fill="#d03737" stroke="#7c1b1b" /><path d="M8 9l4-2 3 2v4l-4 2-3-1z" fill="#24678f" stroke="#123a50" /></symbol>
    <symbol id="s-num" viewBox="0 0 16 16"><path d="M1 2h14v11H1zM10 4.500H7v2.500h2.500V10H7" fill="none" stroke="#50608f" stroke-width="1.200" /></symbol>
    <symbol id="s-note" viewBox="0 0 16 16"><path d="M1 3h14v10l-3-3H1z" fill="#2fc0e0" stroke="#17566c" stroke-width="1.200" /><path d="M3 6h10" stroke="#c5f2fa" stroke-width="1.500" /></symbol>

    <symbol id="ut" viewBox="0 0 16 16"><path d="M1.500 3v6c0 5 6 5 6 0V3M8 4h7.500M12 4v9" fill="none" stroke="#1780b6" stroke-width="2.200" /></symbol>
    <symbol id="star" viewBox="0 0 24 24"><circle cx="12" cy="12" r="11" fill="none" stroke="#fff" stroke-width="1.500" /><path d="M14 4l1 6 5.500 1-5 3.500 1 6-4.500-4L6.500 19l2.500-5-6-3 7-.500z" fill="none" stroke="#fff" stroke-width="1.500" stroke-linejoin="round" /><path d="M13.500 8l.5 3.500 3.500.5-3.500 2 .5 3-2.500-2-3.500 1 2-3-3-1.500h4z" fill="#fff" /></symbol>
    <symbol id="windows" viewBox="0 0 24 24"><path d="M0 2h20v5M0 2v14h6M6 8h18v14H6z" fill="none" stroke="#fff" stroke-width="1.600" /><path d="M13 4.500h5M17 11h5" stroke="#fff" stroke-dasharray="1 1" /></symbol>
    <symbol id="watch" viewBox="0 0 24 24"><path d="M1 22V2h8l2 3h12v17z" fill="none" stroke="#fff" stroke-width="1.600" /><path d="M6 14c4-5 8-5 12 0-4 5-8 5-12 0z" fill="none" stroke="#fff" stroke-width="1.600" /><circle cx="12" cy="14" r="2.500" fill="#fff" /><path d="M8 9l1 2M12 8v2M16 9l-1 2" stroke="#fff" /></symbol>
    <symbol id="terminal" viewBox="0 0 24 24"><path d="M0 2h24v20H0z" fill="#080808" /><path d="M5 8l5 4-5 4M12 17h7" fill="none" stroke="#fff" stroke-width="1.800" /></symbol>
    <symbol id="files" viewBox="0 0 24 24"><path d="M0 2h10l2 3h12v17H0z" fill="#e3ae33" /><path d="M0 6h24v16H0z" fill="#fcd356" /></symbol>
    <symbol id="firefox" viewBox="0 0 24 24"><circle cx="12" cy="12" r="11.500" fill="#ee8a1d" /><circle cx="14" cy="9" r="8" fill="#2371ae" /><path d="M9 5l5-3 4 3-3 4-5-1zM16 11l4 1-3 4z" fill="#78b5dc" /><path d="M1 6c3 1 4 3 4 6 2-2 5-2 6 0l-3 2c2 4 8 4 13-1-1 7-6 10-11 10C3 22-1 14 1 6z" fill="#f7a526" /></symbol>
    <symbol id="tray-up" viewBox="0 0 24 24"><rect x="1" y="1" width="22" height="22" rx="4" fill="none" stroke="#fff" stroke-width="1.500" /><path d="M7 14l5-5 5 5" fill="none" stroke="#fff" stroke-width="1.800" /></symbol>
    <symbol id="sound" viewBox="0 0 24 24"><path d="M1 8h5l6-6v20l-6-6H1zM15 8c2 2 2 6 0 8M18 5c4 4 4 10 0 14M21 3c5 5 4 14 0 18" fill="none" stroke="#fff" stroke-width="1.600" /></symbol>
    <symbol id="net" viewBox="0 0 24 24"><path d="M1 2h15v5M1 2v11h6M3 17h4M8 8h15v11H8zM12 22h8M16 19v3" fill="none" stroke="#fff" stroke-width="1.600" /><path d="M12 13l3 3 5-5" fill="none" stroke="#fff" stroke-width="1.600" /></symbol>
  </svg>

  <div class="app">
    <header class="titlebar">
      <svg class="logo"><use href="#ut" /></svg>
      <span>RPLM</span>
      <div class="win">
        <button aria-label="Свернуть"><svg viewBox="0 0 10 10"><path d="M2 8h5" stroke="#fff" stroke-width="1.500" /></svg></button>
        <button aria-label="Восстановить"><svg viewBox="0 0 10 10"><path d="M3 3V1.500h5.500v4H7M1.500 3.500H7v5H1.500z" fill="none" stroke="#fff" /></svg></button>
        <button aria-label="Закрыть"><svg viewBox="0 0 10 10"><path d="M2 2l6 6M8 2L2 8" stroke="#fff" stroke-width="1.500" /></svg></button>
      </div>
    </header>

    <nav class="menubar">
      <button class="file">Файл</button>
      <div class="quick">
        <button aria-label="Сохранить"><svg class="ic"><use href="#save" /></svg></button>
        <button aria-label="Отменить"><svg class="ic"><use href="#undo" /></svg><svg class="ic-xs"><use href="#tri" /></svg></button>
        <button aria-label="Повторить"><svg class="ic"><use href="#redo" /></svg><svg class="ic-xs"><use href="#tri" /></svg></button>
        <button aria-label="Команды"><svg class="ic"><use href="#lines" /></svg><i class="arrow"></i></button>
      </div>
      <input v-model="command" class="command" type="text" aria-label="Команда" />
      <button class="more" aria-label="Настройка панели"><i class="arrow"></i></button>
      <div class="menus">
        <button
          v-for="t in menuTabs"
          :key="t"
          class="menu"
          :class="{ active: t === activeMenu }"
          @click="activeMenu = t"
        >{{ t }}</button>
      </div>
      <div class="corner">
        <button v-for="n in ['chev-up', 'plug', 'screens', 'help', 'gear']" :key="n" :aria-label="n">
          <svg class="ic-s"><use :href="'#' + n" /></svg>
        </button>
      </div>
    </nav>

    <section class="ribbon">
      <div v-for="g in groups" :key="g.title" class="group" :class="g.size">
        <div class="tools">
          <button v-for="b in g.big" :key="b.label" class="big">
            <svg class="ic-big"><use :href="'#' + b.icon" /></svg>
            <span>{{ b.label }}</span>
            <i v-if="b.arrow" class="arrow"></i>
          </button>
          <div v-for="(col, ci) in g.cols" :key="ci" class="col">
            <template v-for="(it, ii) in col" :key="ii">
              <button v-if="it" class="tool" :class="{ on: it[3] }" :aria-label="it[1] || it[0]">
                <svg class="ic"><use :href="'#' + it[0]" /></svg>
                <span v-if="it[1]">{{ it[1] }}</span>
                <i v-if="it[2]" class="arrow"></i>
              </button>
            </template>
          </div>
        </div>
        <div class="caption">{{ g.title }}</div>
      </div>
    </section>

    <main class="work">
      <aside class="navigator">
        <div class="dock-title">
          <svg class="ic-t"><use href="#panel" /></svg>
          <span>Навигатор модели</span>
          <button class="dock-btn" aria-label="Открепить">⊡</button>
          <button class="dock-btn" aria-label="Закрыть">⊠</button>
        </div>
        <div class="tree-tools">
          <input v-model="treeSearch" type="text" aria-label="Поиск" />
          <button v-for="n in ['a-down', 'a-up', 't-find', 't-gear', 't-tree']" :key="n" :aria-label="n">
            <svg class="ic-m"><use :href="'#' + n" /></svg>
          </button>
          <button class="chevrons">»</button>
        </div>
        <div class="tree">
          <table>
            <thead>
              <tr>
                <th>Имя</th>
                <th class="flag"><svg class="ic"><use href="#eye" /></svg></th>
                <th class="flag"><svg class="ic-s"><use href="#x-blue" /></svg></th>
                <th class="flag"><svg class="ic-m"><use href="#lights" /></svg></th>
              </tr>
            </thead>
            <tbody>
              <tr v-for="(r, i) in tree" :key="i">
                <td>
                  <div class="node" :class="'lv' + r[0]">
                    <i class="twist" :class="r[1]"></i>
                    <svg class="ic"><use :href="'#' + r[2]" /></svg>
                    <span>{{ r[3] }}</span>
                  </div>
                </td>
                <td class="flag"><svg v-if="r[4]" class="ic"><use :href="'#' + r[4]" /></svg></td>
                <td class="flag"><svg v-if="r[5]" class="ic"><use href="#x-pale" /></svg></td>
                <td class="flag"><svg v-if="r[6]" class="ic-s"><use href="#alert" /></svg></td>
              </tr>
            </tbody>
          </table>
        </div>
        <div class="dock-tabs">
          <button>Навиг...</button>
          <button class="active">Навигат...</button>
          <button>Навигатор ...</button>
        </div>
      </aside>

      <section class="document">
        <div class="doc-tabs">
          <div class="doc-tab"><svg class="ic-s"><use href="#ut" /></svg><span>Приветствие</span><button aria-label="Закрыть">✕</button></div>
          <div class="doc-tab active"><svg class="ic-s"><use href="#ut" /></svg><span>ТРД-1-000 ТРД СБ(1)</span><button aria-label="Закрыть">✕</button></div>
        </div>

        <div class="viewport">
          <svg class="scene" viewBox="234 152 1023 637">
            <defs>
              <linearGradient id="gCream" x1="0" y1="0" x2="0" y2="1"><stop offset="0" stop-color="#5b5754" /><stop offset=".12" stop-color="#a09a92" /><stop offset=".42" stop-color="#dcd8cf" /><stop offset=".65" stop-color="#cdc8bf" /><stop offset=".88" stop-color="#918c85" /><stop offset="1" stop-color="#4b4946" /></linearGradient>
              <linearGradient id="gRear" x1="0" y1="0" x2="0" y2="1"><stop offset="0" stop-color="#353332" /><stop offset=".13" stop-color="#62605f" /><stop offset=".45" stop-color="#a09f9e" /><stop offset=".7" stop-color="#929190" /><stop offset="1" stop-color="#3f3e3d" /></linearGradient>
              <linearGradient id="gCase" x1="0" y1="0" x2="0" y2="1"><stop offset="0" stop-color="#2d2f30" /><stop offset=".25" stop-color="#50575b" /><stop offset=".6" stop-color="#77838a" /><stop offset=".85" stop-color="#505659" /><stop offset="1" stop-color="#2c2f31" /></linearGradient>
              <linearGradient id="gInner" x1="0" y1="0" x2="0" y2="1"><stop offset="0" stop-color="#3f4345" /><stop offset=".45" stop-color="#778288" /><stop offset=".8" stop-color="#4a4f52" /><stop offset="1" stop-color="#252729" /></linearGradient>
              <linearGradient id="gBlade" x1="0" y1="0" x2="1" y2="1"><stop offset="0" stop-color="#8f9699" /><stop offset="1" stop-color="#bcc5c9" /></linearGradient>
              <linearGradient id="gDark" x1="0" y1="0" x2="1" y2="1"><stop offset="0" stop-color="#777" /><stop offset="1" stop-color="#353535" /></linearGradient>
              <linearGradient id="gCone" x1="0" y1="0" x2="0" y2="1"><stop offset="0" stop-color="#777" /><stop offset=".3" stop-color="#c9c8ca" /><stop offset=".55" stop-color="#fff" /><stop offset=".75" stop-color="#aaa8ac" /><stop offset="1" stop-color="#646264" /></linearGradient>
              <linearGradient id="gLobe" x1="0" y1="0" x2="0" y2="1"><stop offset="0" stop-color="#2f3335" /><stop offset=".45" stop-color="#5c6163" /><stop offset="1" stop-color="#2b2f31" /></linearGradient>
              <linearGradient id="gDrum" x1="0" y1="0" x2="0" y2="1"><stop offset="0" stop-color="#666" /><stop offset=".5" stop-color="#d5d5d8" /><stop offset="1" stop-color="#555" /></linearGradient>
            </defs>

            <!-- exhaust lobes -->
            <path d="M985 335C1014 390 1016 490 985 548" fill="none" stroke="#2b2f31" stroke-width="12" />
            <g fill="url(#gLobe)">
              <path d="M955 310C968 305 985 308 985 330V350L965 345z" />
              <path d="M980 348L1004 334C1018 331 1021 343 1016 357L1004 382 992 390z" />
              <path d="M998 392L1030 382C1042 381 1043 400 1039 406L1008 425z" />
              <path d="M1000 437L1037 441C1047 442 1047 468 1038 470L1000 467z" />
              <path d="M1000 472L1013 475C1018 487 1030 497 1031 508C1031 520 1027 526 1017 523L995 516z" />
              <path d="M985 520H996C998 530 1003 537 1002 548C999 562 990 560 975 550z" />
            </g>

            <!-- rear casing -->
            <path :d="fifthEdge" fill="#777573" stroke="#151515" stroke-width="1.500" />
            <path d="M700 290L905 286C970 288 1002 370 1003 440C1002 520 965 583 920 588L780 592z" fill="url(#gRear)" stroke="#111" stroke-width="1.200" />
            <circle v-for="(p, i) in fifthBolts" :key="'f' + i" :cx="p[0]" :cy="p[1]" r="1.500" fill="#999" stroke="#111" stroke-width=".8" />
            <path :d="fourthEdge" fill="#777573" stroke="#111" stroke-width="2" />
            <path d="M700 290L820 286C880 290 911 370 914 435C915 500 895 555 850 592L750 592z" fill="url(#gRear)" stroke="#111" stroke-width="1.200" />
            <circle v-for="(p, i) in fourthBolts" :key="'r' + i" :cx="p[0]" :cy="p[1]" r="1.600" fill="#999" stroke="#111" stroke-width=".8" />

            <!-- middle casing -->
            <ellipse cx="699" cy="440" rx="104" ry="158" transform="rotate(-4 699 440)" fill="#151515" />
            <ellipse cx="697" cy="440" rx="103" ry="157" transform="rotate(-4 697 440)" fill="#a09a91" stroke="#222" />
            <path d="M560 299L694 287C752 290 790 367 793 440C795 510 765 570 730 596L590 597z" fill="url(#gCream)" stroke="#333" stroke-width=".8" />
            <circle v-for="(p, i) in thirdBolts" :key="'t' + i" :cx="p[0]" :cy="p[1]" r="1.400" fill="#aaa" stroke="#111" stroke-width=".9" />
            <path d="M605 310C680 380 690 520 622 590M600 303C674 370 682 520 618 585" fill="none" stroke="#555" stroke-width=".7" />

            <!-- fan casing -->
            <ellipse cx="561" cy="449" rx="98" ry="158" transform="rotate(-4 561 449)" fill="#24282a" stroke="#080808" stroke-width="2.500" />
            <circle v-for="(p, i) in secondBolts" :key="'s' + i" :cx="p[0]" :cy="p[1]" r="2" fill="#4c555a" stroke="#050505" />
            <path d="M475 305L545 298C610 290 650 375 651 450C651 540 600 606 558 606L475 609z" fill="url(#gCase)" />
            <path d="M520 303C590 297 621 380 623 445C624 535 575 590 535 606" fill="none" stroke="#080808" stroke-width="2.500" />
            <path d="M510 303C585 300 616 380 618 445C618 535 570 590 525 606" fill="none" stroke="#202426" />
            <path d="M500 305C550 318 578 385 580 455C580 530 548 585 510 606" fill="none" stroke="#080808" stroke-width="1.500" />
            <path d="M484 294L552 289 550 296 528 303C510 300 495 304 484 294z" fill="#1b1b1b" />

            <!-- intake duct -->
            <path d="M444 290L449 276 516 274 518 293 480 298z" fill="#303031" stroke="#111" />
            <ellipse cx="481" cy="281" rx="39" ry="8" transform="rotate(-11 481 281)" fill="#2b2b33" stroke="#111" />
            <ellipse cx="481" cy="277" rx="38" ry="7" transform="rotate(-11 481 277)" fill="#3e3d78" stroke="#171738" stroke-width="1.500" />
            <ellipse cx="487" cy="271" rx="31" ry="5" transform="rotate(-6 487 271)" fill="#5c5ab0" stroke="#23234f" />
            <path d="M452 281l3 2M466 284l3 1M482 283l3 0M498 279l3-1M510 274l3-2" stroke="#111" stroke-width="2" />

            <path :d="frontEdge" fill="#4c5356" stroke="#15181a" stroke-width="1.300" />
            <circle v-for="(p, i) in frontBolts" :key="'b' + i" :cx="p[0]" :cy="p[1]" r="1.500" fill="#6d757a" stroke="#111" stroke-width=".9" />
            <ellipse cx="475" cy="453" rx="89" ry="149" transform="rotate(-3 475 453)" fill="#899298" stroke="#111" />
            <ellipse cx="475" cy="453" rx="87" ry="147" transform="rotate(-3 475 453)" fill="url(#gInner)" stroke="#15181a" />

            <g transform="translate(370 230) scale(.3333)" stroke="#1b1b1b" stroke-width="4" stroke-linejoin="round">
              <path d="M240 700C260 860 330 1000 440 1060C500 1040 560 940 575 800L440 740z" fill="#d3d3d2" />
              <path d="M440 880L410 1045 485 1040 495 900zM520 850L500 1000 545 930zM345 880L370 1000 440 1050 430 880z" fill="#f1f1f0" stroke-width="2" />
              <path d="M250 740l40 0M255 780l45 10M270 830l50 0M285 870l60 10M300 910l70 -10M320 950l60 10M340 990l60 5M510 860l30 80M480 860l10 160M450 900l20 140M265 730l30 100M300 880l60 120" fill="none" stroke-width="4" />
              <path d="M190 730C200 860 250 990 400 1080" fill="none" stroke-width="3" />
              <g fill="url(#gBlade)">
                <path d="M497 362C520 390 545 440 550 475C500 500 470 530 450 573L410 575C425 500 455 430 497 362z" />
                <path d="M416 268L495 360C470 420 430 460 415 540L383 547C383 480 400 430 416 268z" />
                <path d="M318 243C345 238 390 255 416 268C412 330 385 390 383 470L382 525 352 538C345 480 320 420 325 350z" />
                <path d="M222 300C250 272 290 266 320 265C325 350 315 400 330 450C340 490 352 510 352 540L320 548C290 500 270 460 262 400C255 350 232 320 222 300z" />
                <path d="M150 415C175 375 210 355 240 345C255 380 262 430 280 480C300 520 310 535 322 550L290 575C260 555 225 520 205 480C190 450 165 430 150 415z" />
                <path d="M113 570C125 525 150 490 187 465C210 500 240 540 288 570L262 620C200 620 180 595 160 580C140 570 125 575 113 570z" />
                <path d="M550 475C570 510 580 560 580 600C530 605 480 615 427 613C455 560 500 500 550 475z" />
                <path d="M425 615L580 605 580 800 510 850 400 780z" />
              </g>
              <path d="M385 440C400 430 425 450 418 490L410 530 387 542z" fill="#f6f8f8" stroke="none" />
              <g fill="url(#gDark)">
                <path d="M115 737C125 690 145 640 175 608C200 620 230 622 260 622L250 690C220 700 190 702 165 708C140 715 125 730 115 737z" />
                <path d="M153 893C155 850 165 790 200 760C230 745 260 745 280 740C265 780 240 800 210 830C180 860 165 880 153 893z" />
                <path d="M225 1015C210 970 210 930 240 890C270 850 295 800 305 765L335 760C325 810 300 850 275 890C250 930 230 970 225 1015z" />
                <path d="M320 1082C300 1050 300 1010 315 970C330 920 335 850 340 785L370 790C400 850 375 900 350 940C335 970 325 1030 320 1082z" />
                <path d="M412 1080C395 1040 400 990 400 940C400 880 375 840 370 800L400 785C440 850 445 900 430 950C420 1000 410 1040 412 1080z" />
                <path d="M493 1025C480 960 465 930 445 890C425 850 405 820 398 780C440 800 490 830 497 880C500 940 495 990 493 1025z" />
                <path d="M437 660C480 620 530 605 580 605L580 682C530 680 480 668 437 660z" />
                <path d="M432 710C480 705 540 720 578 745L578 780C540 750 480 730 432 710z" />
                <path d="M415 750C470 790 520 800 540 840C550 860 552 870 552 885C520 840 470 800 415 750z" />
              </g>
              <path d="M350 540C380 530 420 560 425 620L425 700C415 750 390 790 365 785C315 780 265 740 250 665C270 590 310 550 350 540z" fill="url(#gCone)" />
              <path d="M365 580l18 -7 8 8 -20 9zM390 680h27v12h-27zM353 765l18 8 5 10 -20 -8z" fill="#222" />
            </g>

            <!-- blue cable -->
            <path d="M600 275C575 277 555 285 560 293C585 305 605 320 618 350C635 400 635 470 622 510C610 550 600 580 580 590M490 604C497 615 505 620 513 621" fill="none" stroke="#20296d" stroke-width="3" />
            <path d="M600 275C575 277 555 285 560 293C585 305 605 320 618 350C635 400 635 470 622 510C610 550 600 580 580 590M490 604C497 615 505 620 513 621" fill="none" stroke="#5267d0" stroke-width="1.500" />

            <!-- upper brackets and pipes -->
            <path d="M580 285L625 256 665 245 690 262 685 285 600 295z" fill="#3d4245" stroke="#101010" />
            <path d="M588 281L626 260 665 262 640 275 600 292z" fill="#4f5558" stroke="#111" />
            <path d="M635 284L670 278 705 284 690 292 640 295z" fill="#b5b6b4" stroke="#111" />
            <path d="M640 282L590 298M612 268L600 290M626 258L668 250M630 266h10v6h-10zM688 280h10v10h-10z" fill="#a5a9ab" stroke="#111" stroke-width="1.500" />
            <g fill="none" stroke-linecap="round" stroke-linejoin="round">
              <g stroke="#27292b" stroke-width="5"><path d="M585 290L610 277 670 273M720 269L752 270 760 276 785 275 800 271 850 274 868 277" /><path d="M720 284L745 284 752 290" /></g>
              <g stroke="#bfc3c9" stroke-width="3"><path d="M585 290L610 277 670 273M720 269L752 270 760 276 785 275 800 271 850 274 868 277" /><path d="M720 284L745 284 752 290" /></g>
              <path d="M672 246C690 240 693 268 710 275M695 272C745 255 798 252 798 272V282M690 252C705 260 700 280 712 294M680 244L714 298" stroke="#4d484c" stroke-width="2" />
            </g>
            <g fill="#111" stroke="#333"><circle cx="657" cy="251" r="6" /><circle cx="669" cy="251" r="6" /><circle cx="665" cy="264" r="6" /><circle cx="679" cy="262" r="5" /><circle cx="643" cy="265" r="5" fill="#8b6d39" /><circle cx="780" cy="275" r="4" /><circle cx="848" cy="273" r="2" /></g>
            <circle cx="605" cy="276" r="5" fill="#1f72c4" stroke="#111" />
            <path d="M862 291l5-10h12l4 10z" fill="none" stroke="#0d1c33" stroke-width="3" />
            <path d="M793 280h9v9h-9z" fill="#111" />
            <path d="M790 289h13v4h-13zM791 294h11v5h-11zM793 300h8v5h-8z" fill="#c9a451" stroke="#111" />
            <rect x="763" y="303" width="9" height="7" rx="2" fill="#999" stroke="#111" />

            <!-- wiring loom -->
            <g fill="none">
              <path d="M680 250L715 297C750 320 782 400 777 475C775 500 772 512 768 525" stroke="#393338" stroke-width="8" />
              <path d="M680 250L715 297C750 320 782 400 777 475C775 500 772 512 768 525" stroke="#85777f" stroke-width="6" />
              <path d="M680 250L715 297C750 320 782 400 777 475C775 500 772 512 768 525" stroke="#4a4147" stroke-width="2" />
            </g>
            <g fill="#d97a35" stroke="#4a260d" stroke-width=".8"><rect x="713" y="292" width="7" height="14" rx="3" /><rect x="765" y="385" width="13" height="7" rx="2" /><rect x="765" y="511" width="13" height="7" rx="2" /></g>
            <path d="M728 309l7-4M759 358h8M774 422h8M773 490h8" stroke="#1b4fb4" stroke-width="4" />

            <!-- handles and fittings on the casing -->
            <g stroke="#111" stroke-width="3" stroke-linecap="round"><path d="M722 343L742 341M749 453L769 452M847 336L866 336M874 448L893 448M722 559L742 558M847 556L866 556" /></g>
            <g fill="#111"><circle v-for="(p, i) in [[722, 343], [742, 341], [749, 453], [769, 452], [847, 336], [866, 336], [874, 448], [893, 448], [722, 559], [742, 558], [847, 556], [866, 556], [926, 386], [962, 385], [913, 540], [949, 538]]" :key="'h' + i" :cx="p[0]" :cy="p[1]" r="3.200" /></g>
            <path d="M807 380h17l4 20h-20z" fill="#222" stroke="#111" /><ellipse cx="819" cy="389" rx="8" ry="9" fill="#e6e6e4" />
            <path d="M890 310L914 306 918 332 906 331zM934 448h13v10l7 8-7 10-4 8h-10z" fill="#807e7c" stroke="#111" stroke-width="1.500" /><path d="M903 313l6 0 3 14-5-2zM938 454l10 12-10 12z" fill="#5d5b59" stroke="#111" />
            <circle cx="883" cy="541" r="4" fill="#c9c8c5" stroke="#333" />
            <g stroke="#222" fill="#bdb9b2">
              <path d="M630 314h10v14h-10zM651 311h11v13h-11zM650 337h11v15h-11zM670 334h12v15h-12z" />
              <circle cx="637" cy="312" r="4" /><circle cx="657" cy="313" r="4" /><circle cx="659" cy="337" r="5" /><circle cx="679" cy="338" r="4" />
              <ellipse cx="657" cy="325" rx="15" ry="9" /><ellipse cx="659" cy="324" rx="9" ry="6" fill="#8e8a84" />
              <path d="M676 452l10-5 8 5 8-5 8 8-3 12 4 20-5 10-10 2-9-4-10 3-5-8 5-14z" fill="#a8a49d" />
              <circle cx="679" cy="452" r="6" fill="#8c8883" /><circle cx="700" cy="450" r="6" fill="#8c8883" />
              <circle cx="687" cy="456" r="5" /><circle cx="706" cy="456" r="5" /><circle cx="684" cy="495" r="5" /><circle cx="703" cy="495" r="5" />
              <circle cx="687" cy="456" r="2" fill="#555" /><circle cx="706" cy="456" r="2" fill="#555" /><circle cx="684" cy="495" r="2" fill="#555" /><circle cx="703" cy="495" r="2" fill="#555" />
              <ellipse cx="695" cy="475" rx="10" ry="12" fill="#dedad2" stroke-width="2" />
            </g>

            <!-- green gearbox -->
            <path d="M610 592L650 558 690 555 715 557 720 570 712 590 700 610 685 632 655 635 640 620z" fill="#618566" stroke="#152018" stroke-width="1.200" />
            <path d="M650 560L655 600 635 615M690 600L715 575M660 625L690 600 650 602M680 552V566C685 572 693 572 698 566V552z" fill="#7ba47e" stroke="#152018" />
            <rect x="669" y="564" width="8" height="31" rx="4" transform="rotate(-12 673 580)" fill="#1d2b20" stroke="#0b100c" />
            <path d="M656 542l36 2 1 8-36-1zM660 552h35" fill="none" stroke="#151515" stroke-width="1.500" />

            <!-- shadowed back of the accessory bay -->
            <path d="M695 605L722 580 780 560 850 570 875 592 800 606 812 622 808 655 790 672 740 678 690 668z" fill="#505356" stroke="#1b1d1f" />
            <path d="M795 612L880 590 835 608 815 625z" fill="#45484a" stroke="#111" />

            <!-- blue pumps -->
            <path d="M693 615L755 607 775 625 782 650 765 664 735 668 700 670 690 650z" fill="#2d6386" stroke="#0d2130" stroke-width="1.500" />
            <path d="M715 609L750 607C761 612 762 630 752 637L715 638zM700 645L735 640 740 660 710 668zM752 632l26 2 3 16-26 4z" fill="#4b89b0" stroke="#0d2130" />
            <circle cx="706" cy="621" r="11" fill="#3d7ba3" stroke="#0d2130" /><circle cx="706" cy="621" r="6" fill="#275a7a" stroke="#0d2130" /><circle cx="706" cy="621" r="2" fill="#6ba6c9" />
            <path d="M716 632h9v13h-9zM728 632h9v13h-9zM740 632h9v13h-9z" fill="#3f7ea6" stroke="#0d2130" />
            <path d="M729 608v28M741 608v28M692 640l20 8M700 660l36-6M758 640l20 1" fill="none" stroke="#12334a" stroke-width="1.500" />

            <g stroke="#15181a" fill="#9fa2a4"><rect v-for="(f, i) in fittings" :key="'q' + i" :x="f[0]" :y="f[1]" :width="f[2]" :height="f[3]" rx="1" /></g>
            <g fill="#191b1c" stroke="#777" stroke-width=".6"><circle v-for="(p, i) in dots" :key="'d' + i" :cx="p[0]" :cy="p[1]" r="3" /></g>

            <!-- fuel lines -->
            <g fill="none" stroke-linecap="round" stroke-linejoin="round">
              <g stroke="#1c1e20" stroke-width="5">
                <path d="M708 555C720 540 745 550 752 570C760 592 775 590 784 612M717 580C724 615 736 620 755 622M693 620C695 650 710 655 716 648" />
                <path d="M770 590L945 595M775 602L855 597M793 612L812 575M780 596L790 620M773 640V668M742 675C715 688 700 672 690 671L512 684M798 640L803 665 780 675" />
                <path d="M727 642V655C720 675 700 668 690 668M748 560C765 545 780 575 778 590M738 645L740 660 724 672M758 622L815 620M785 632L790 656M882 582L884 598" />
              </g>
              <g stroke="#cbccd2" stroke-width="3">
                <path d="M708 555C720 540 745 550 752 570C760 592 775 590 784 612M717 580C724 615 736 620 755 622M693 620C695 650 710 655 716 648" />
                <path d="M770 590L945 595M775 602L855 597M793 612L812 575M780 596L790 620M773 640V668M742 675C715 688 700 672 690 671L512 684M798 640L803 665 780 675" />
                <path d="M727 642V655C720 675 700 668 690 668M748 560C765 545 780 575 778 590M738 645L740 660 724 672M758 622L815 620M785 632L790 656M882 582L884 598" />
              </g>
              <path d="M735 548l3-3M756 578l5-2M724 604l5-2M852 592v5M872 591v5M900 592v5M640 673v6M600 676v6M790 645l5 0M724 650h6" stroke="#111" stroke-width="2" />
              <path d="M768 520C760 545 748 558 752 580M768 520C765 560 800 560 812 570M770 524C785 550 820 540 830 568L842 572M768 522C762 545 770 550 780 565M780 572C820 580 836 585 833 604M770 540C790 560 795 575 790 590M690 626C715 615 730 575 765 560" stroke="#6d6268" stroke-width="1.500" />
            </g>
            <g stroke="#15181a" fill="#c4c6c7">
              <path d="M750 588l18-3 7 30-20 5zM792 562l10-20 15 5-3 22-14 8z" /><ellipse cx="758" cy="587" rx="10" ry="6" fill="#ddd" /><ellipse cx="808" cy="547" rx="10" ry="7" /><ellipse cx="809" cy="547" rx="6" ry="4" fill="#8d9092" />
              <path d="M660 645l18-5 14 10-5 16-20 4zM650 673h10v10h-10zM667 672h8v11h-8zM753 632h9v12h-9zM795 663h10v9h-10zM940 587h10v12h-10z" />
              <path d="M753 600l20-3M755 608l20-3" fill="none" />
              <ellipse cx="803" cy="640" rx="8" ry="13" /><ellipse cx="806" cy="640" rx="4" ry="9" fill="#777" />
              <circle cx="650" cy="646" r="8" fill="#888" /><circle cx="650" cy="646" r="4" fill="#ddd" />
            </g>
            <g fill="#17191a" stroke="#050505"><path d="M842 565l25-8 15 2 5 18-15 8-22-5z" /><ellipse cx="877" cy="572" rx="10" ry="14" fill="#303436" /><circle cx="778" cy="585" r="6" /><circle cx="817" cy="617" r="5" /><circle cx="679" cy="634" r="6" /><path d="M762 588l14-7 4 8-14 6zM664 638l14-8 4 9-13 6z" /></g>
            <path d="M850 566l2 12M856 564l2 14M862 563l1 14" stroke="#b8babb" />

            <!-- starter drum -->
            <path d="M540 585C560 577 610 577 620 590L632 625" fill="none" stroke="#17191a" stroke-width="6" /><path d="M538 608L545 586C560 581 600 581 613 583L628 610 636 632" fill="none" stroke="#c0c2c7" stroke-width="4" />
            <path d="M555 595h55l5 12h-62zM514 600l24-4 3 16-25 6z" fill="#55595b" stroke="#111" /><circle cx="569" cy="595" r="5" fill="#196dc0" stroke="#111" />
            <path d="M535 611L625 609C645 617 650 675 625 682L540 684z" fill="#4f5355" stroke="#111" />
            <path d="M582 611L620 609C638 618 638 675 620 682L580 682C590 660 592 630 582 611z" fill="url(#gDrum)" stroke="#111" />
            <path d="M550 612L580 611C590 630 590 665 578 682L545 683z" fill="url(#gCase)" stroke="#111" />
            <path d="M525 611L548 613C560 630 560 670 545 683L524 684C500 678 501 617 525 611z" fill="url(#gDrum)" stroke="#111" />
            <ellipse cx="526" cy="648" rx="19" ry="35" fill="#a6a7a8" stroke="#222" /><ellipse cx="525" cy="648" rx="15" ry="28" fill="none" stroke="#555" stroke-width=".7" /><ellipse cx="525" cy="648" rx="10" ry="16" fill="#858687" stroke="#111" /><ellipse cx="525" cy="648" rx="5" ry="8" fill="#b9babb" stroke="#111" />
            <g fill="#111"><circle cx="601" cy="652" r="2.600" /><circle cx="612" cy="652" r="2.600" /><circle cx="624" cy="651" r="2.600" /><circle cx="593" cy="617" r="1.600" /><circle cx="604" cy="616" r="1.600" /><circle cx="615" cy="616" r="1.600" /></g>

            <!-- coordinate systems -->
            <g fill="none" stroke="#c10fc1" stroke-width="1">
              <path d="M467 423L463 402M420 457L453 453M492 441L505 433M640 479L692 475 730 458M692 475L689 448M690 550L693 503M635 549L690 551M946 605L943 570M946 600L920 616" />
              <path d="M687 507L693 495 699 507zM722 455L733 458 725 465zM900 600l5 6M905 600l-5 6M908 602l6-5v8zM730 456l2 3 2-3M697 551v18M463 392h4l-4 5h4" />
            </g>
            <g fill="#a312a3"><path d="M461 410L463 398 467 409zM432 453L444 450V455zM500 432L509 431 504 439zM652 475L661 473V479zM915 612L926 609 924 616zM632 546L640 549 633 552zM694 552H698V568H694z" /></g>
          </svg>

          <div class="view-tools">
            <button v-for="v in viewTools" :key="v[0]" :class="{ wide: v[1] === 2 }" :aria-label="v[0]">
              <svg class="ic-m"><use :href="'#' + v[0]" /></svg><i v-if="v[1]" class="arrow"></i>
            </button>
          </div>

          <svg class="view-cube" viewBox="0 0 100 94">
            <path d="M79 0H101V19z" fill="#a9a9a9" />
            <path d="M65 7l8-6v3c6 0 10 3 12 6l-4 3c-2-3-4-3-8-3v3zM84 10l7 7h-3v8h-8v-8h-3zM92 19c5 5 6 9 5 12h4l-6 7-6-7h4c0-4-1-6-4-8z" fill="#a9a9a9" />
            <path d="M87 4h6M90 1v6M94 10h5" stroke="#222" stroke-width="1.300" />
            <g transform="translate(7 0)">
              <path d="M3 43Q2 40 4 38L24 18Q27 15 30 16L64 23Q67 24 69 27L81 69Q82 72 79 74L50 83 13 89Q9 89 8 86z" fill="#929292" />
              <path d="M3 42L23 19Q27 17 28 22L36 74Q36 80 32 82L13 87Q9 88 8 85z" fill="#d3d3d3" />
              <path d="M26 17L66 25Q68 26 69 29L81 66Q82 70 78 72L41 80Q36 80 35 76L25 22Q24 17 26 17z" fill="#f8f8f8" />
              <path d="M30 22L65 28 76 65 41 72z" fill="#fff" />
              <path d="M3 42L23 19Q25 16 29 16L65 23Q68 25 70 29" fill="none" stroke="#999" />
              <text x="38" y="43" transform="rotate(6 38 43)">Спереди</text>
              <text class="side" x="10" y="64" transform="rotate(-38 10 64)">Слева</text>
            </g>
          </svg>

          <div class="filters">
            <button aria-label="Включить фильтр"><svg class="ic"><use href="#s-ok" /></svg></button>
            <button aria-label="Сбросить фильтр"><svg class="ic"><use href="#s-no" /></svg></button>
            <hr />
            <button v-for="f in filters" :key="f" class="tile" :aria-label="f"><svg class="ic-t"><use :href="'#' + f" /></svg></button>
          </div>
        </div>
      </section>

      <aside class="reference">
        <div class="dock-title">
          <svg class="ic-t"><use href="#grid" /></svg>
          <span>Справочники</span>
          <button class="dock-btn" aria-label="Открепить">⊡</button>
          <button class="dock-btn" aria-label="Закрыть">⊠</button>
        </div>
        <div class="ref-tools">
          <div class="search">
            <input v-model="refSearch" type="text" aria-label="Поиск в справочниках" />
            <svg viewBox="0 0 30 12"><path d="M5 2L1 6l4 4M12 2l4 4-4 4" fill="none" stroke="#222" stroke-width="1.500" /><path d="M20 2h9l-3 3v6h-3V5z" fill="#888" /></svg>
          </div>
          <button aria-label="Подключить"><svg class="ic-t"><use href="#plug" /></svg></button>
          <button aria-label="Обновить"><svg class="ic-t"><use href="#refresh" /></svg></button>
        </div>
      </aside>
    </main>

    <footer class="taskbar">
      <div class="launch">
        <button v-for="n in ['star', 'windows', 'watch']" :key="n" :aria-label="n"><svg class="ic-l"><use :href="'#' + n" /></svg></button>
      </div>
      <button v-for="(t, i) in tasks" :key="i" class="task" :class="{ active: t[2] }">
        <svg class="ic-l"><use :href="'#' + t[0]" /></svg><span>{{ t[1] }}</span>
      </button>
      <div class="tray">
        <button v-for="n in ['tray-up', 'sound', 'net']" :key="n" :aria-label="n"><svg class="ic-l"><use :href="'#' + n" /></svg></button>
        <button class="lang">en</button>
        <div class="clock"><b>13:09</b><span>ПН, 11 ИЮЛ</span></div>
      </div>
    </footer>
  </div>
</template>

<style>
body {
  margin: 0;
  overflow: hidden;
}
</style>

<style scoped>
.defs {
  position: absolute;
  width: 0;
  height: 0;
}

.app {
  display: flex;
  flex-direction: column;
  height: 100vh;
  font: 11px/14px "Noto Sans", "DejaVu Sans", sans-serif;
  color: #222;
  background: #f4f4f4;
}

.app *,
.app {
  box-sizing: border-box;
}

button,
input {
  font: inherit;
  color: inherit;
}

button {
  display: flex;
  align-items: center;
  padding: 0;
  border: 0;
  background: none;
  white-space: nowrap;
}

svg {
  flex: none;
}

.ic { width: 14px; height: 14px; }
.ic-s { width: 12px; height: 12px; }
.ic-t { width: 13px; height: 13px; }
.ic-xs { width: 8px; height: 8px; }
.ic-m { width: 16px; height: 16px; }
.ic-big { width: 26px; height: 26px; }
.ic-l { width: 24px; height: 24px; }

.arrow {
  flex: none;
  width: 0;
  height: 0;
  border: 2px solid transparent;
  border-top: 3px solid #444;
  border-bottom: 0;
}

.titlebar {
  flex: none;
  display: flex;
  align-items: center;
  gap: 4px;
  height: 19px;
  padding: 0 4px 1px;
  color: #e9f0f5;
  background: #5682a3;
}

.logo {
  width: 12px;
  height: 12px;
}

.win {
  display: flex;
  gap: 10px;
  margin-left: auto;
}

.win svg {
  width: 10px;
  height: 10px;
}

.menubar {
  flex: none;
  display: flex;
  align-items: stretch;
  height: 22px;
  padding-left: 1px;
  background: #efefef;
}

.file {
  justify-content: center;
  width: 61px;
  color: #f0f0f5;
  background: #62617a;
}

.quick {
  display: flex;
  align-items: center;
  gap: 9px;
  width: 118px;
  padding-left: 6px;
}

.quick .arrow {
  margin-left: 3px;
}

.command {
  width: 78px;
  margin: 2px 0 1px;
  border: 1px solid #bbb;
  background: #fff;
}

.more {
  justify-content: center;
  width: 13px;
}

.menus {
  display: flex;
  gap: 1px;
}

.menu {
  padding: 0 9px;
}

.menu.active {
  color: #66657e;
  background: #fafafa;
}

.corner {
  display: flex;
  align-items: center;
  gap: 6px;
  margin-left: auto;
  padding: 0 5px 2px 0;
}

.ribbon {
  flex: none;
  display: flex;
  height: 84px;
  padding: 3px 0 1px;
  background: #fafafa;
  border-bottom: 1px solid #ccc;
}

.group {
  flex: none;
  display: flex;
  flex-direction: column;
  border-right: 1px solid #ccc;
}

.g-sketch { width: 247px; }
.g-ops { width: 245px; }
.g-elems { width: 412px; }
.g-aux { width: 106px; }
.g-curves { width: 85px; }
.g-surf { width: 151px; }
.g-array { width: 50px; }
.g-annot { width: 82px; }
.g-extra { width: 93px; }

.tools {
  display: flex;
  height: 63px;
}

.big {
  flex: none;
  flex-direction: column;
  gap: 4px;
  width: 66px;
  padding-top: 3px;
}

.big span {
  white-space: normal;
}

.g-sketch .big {
  width: 61px;
}

.g-ops .tools {
  padding-left: 1px;
}

.g-sketch .big span {
  width: 50px;
}

.col {
  flex: none;
  display: flex;
  flex-direction: column;
}

.tool {
  gap: 4px;
  height: 21px;
  padding: 0;
}

.tool .arrow {
  margin-left: 2px;
}

.tool.on {
  background: #d0d0d2;
}

.caption {
  text-align: center;
}

.g-sketch .col { width: 114px; }
.g-sketch .col:last-child { width: 70px; }
.g-ops .col { padding-left: 7px; }
.g-elems .tools { padding-left: 7px; }
.g-elems .col:nth-child(1) { width: 96px; }
.g-elems .col:nth-child(2) { width: 120px; }
.g-elems .col:nth-child(3) { width: 91px; }
.g-aux .tools { padding-left: 27px; }
.g-aux .col,
.g-curves .col { width: 29px; }
.g-curves .col:last-child { width: 14px; }
.g-aux .tool,
.g-curves .tool { gap: 3px; }
.g-curves .tools { padding-left: 6px; }
.g-surf .tools { padding-left: 7px; }
.g-surf .col { width: 20px; }
.g-surf .col:first-child { width: 102px; }
.g-array .tools { padding-left: 14px; }
.g-annot .tools { padding-left: 20px; }
.g-annot .col { width: 29px; }
.g-extra .tools { padding-left: 25px; }
.g-extra .col { width: 22px; }
.g-extra .tool { gap: 2px; }

.work {
  flex: 1;
  display: flex;
  min-height: 0;
}

.navigator {
  flex: none;
  display: flex;
  flex-direction: column;
  width: 230px;
  padding: 1px 2px 2px;
  background: #fafafa;
}

.dock-title {
  display: flex;
  align-items: center;
  height: 16px;
}

.dock-title span {
  margin-right: auto;
}

.dock-btn {
  width: 11px;
  font-size: 9px;
  color: #777;
}

.tree-tools {
  display: flex;
  align-items: center;
  gap: 7px;
  height: 27px;
  margin-bottom: 4px;
}

.tree-tools input {
  width: 90px;
  height: 19px;
  border: 1px solid #bbb;
  background: #fff;
}

.chevrons {
  margin-left: 3px;
  font-size: 14px;
}

.tree {
  flex: 1;
  min-height: 0;
  background: #fff;
  border: 1px solid #ccc;
}

table {
  width: 100%;
  height: 562px;
  table-layout: fixed;
  border-collapse: collapse;
  border-bottom: 1px solid #ccc;
}

th,
td {
  padding: 0;
  font-weight: normal;
  text-align: left;
}

th {
  background: #efefef;
}

.flag {
  width: 19px;
  line-height: 0;
  text-align: center;
  border-left: 1px solid #ccc;
}

tbody tr:nth-child(even) {
  background: #e7e5e2;
}

.node {
  display: flex;
  align-items: center;
  height: 14px;
  padding-left: 1px;
  white-space: nowrap;
}

.node span {
  margin-left: 4px;
}

.lv1 { padding-left: 9px; }
.lv2 { padding-left: 17px; }
.lv3 { padding-left: 25px; }

.twist {
  width: 10px;
  height: 12px;
}

.twist::before {
  content: "";
  display: block;
  width: 0;
  height: 0;
  border: 4px solid transparent;
}

.twist.closed::before {
  border-left: 5px solid #101058;
  border-right: 0;
}

.twist.open::before {
  margin-top: 1px;
  border-top: 5px solid #101058;
  border-bottom: 0;
}

.dock-tabs {
  display: flex;
  height: 19px;
  margin-top: 1px;
}

.dock-tabs button {
  flex: 1 0 auto;
  justify-content: center;
  padding: 0 10px;
  background: #e4e4e4;
}

.dock-tabs .active {
  background: #f6f6f6;
}

.document {
  flex: 1;
  display: flex;
  flex-direction: column;
  min-width: 0;
  padding: 3px 0 15px 3px;
  background: #efefef;
}

.doc-tabs {
  display: flex;
  height: 23px;
  padding-left: 2px;
  background: #fff;
}

.doc-tab {
  display: flex;
  align-items: center;
  gap: 5px;
  padding: 0 14px 0 3px;
  background: #e5e5e5;
}

.doc-tab.active {
  padding: 0 18px 0 5px;
  background: #efefef;
  border: 1px solid #ccc;
  border-bottom: 0;
}

.doc-tab button {
  margin-left: 4px;
  font-size: 9px;
  color: #666;
}

.viewport {
  position: relative;
  flex: 1;
  min-height: 0;
  border: 1px solid #55b8d3;
  background: #efefef;
}

.scene {
  position: absolute;
  inset: 0;
  width: 100%;
  height: 100%;
}

.view-tools {
  position: absolute;
  top: 1px;
  right: 140px;
  display: flex;
  height: 29px;
  padding-left: 7px;
  background: #fff;
}

.view-tools button {
  width: 26px;
}

.view-tools .wide {
  width: 31px;
  padding-left: 3px;
}

.view-tools button:last-child {
  width: 23px;
}

.view-tools .arrow {
  margin-left: 1px;
}

.view-cube {
  position: absolute;
  top: 4px;
  right: 5px;
  width: 100px;
  height: 94px;
  overflow: visible;
}

.view-cube text {
  font: 10px "Liberation Sans", sans-serif;
  fill: #111;
}

.view-cube .side {
  font-size: 8px;
}

.filters {
  position: absolute;
  top: 126px;
  right: 1px;
  display: flex;
  flex-direction: column;
  align-items: center;
  justify-content: space-between;
  width: 24px;
  height: 385px;
  padding: 2px 0;
  background: #fff;
}

.filters button {
  justify-content: center;
  width: 18px;
  height: 18px;
}

.filters .tile {
  background: #c5c7ca;
}

.filters hr {
  width: 10px;
  margin: 2px 0;
  border: 0;
  border-top: 1px solid #ddd;
}

.reference {
  flex: none;
  display: flex;
  flex-direction: column;
  width: 242px;
  padding: 1px 3px 0 1px;
  background: #fff;
  border-left: 4px solid #f4f4f4;
}

.ref-tools {
  display: flex;
  align-items: center;
  gap: 7px;
  margin-top: 4px;
}

.search {
  position: relative;
  flex: 1;
  display: flex;
}

.search input {
  width: 100%;
  height: 16px;
  border: 1px solid #bbb;
}

.search svg {
  position: absolute;
  top: 2px;
  right: 2px;
  width: 30px;
  height: 12px;
}

.taskbar {
  flex: none;
  display: flex;
  height: 38px;
  color: #eef3f7;
  background: #4d7492;
  border-top: 1px solid #7f98ab;
}

.launch {
  display: flex;
  align-items: center;
  gap: 13px;
  width: 120px;
  padding-left: 6px;
}

.launch button:last-child {
  padding-right: 8px;
  border-right: 1px solid #6b8ca5;
}

.task {
  gap: 2px;
  width: 134px;
  padding-left: 4px;
  font-size: 10px;
}

.task.active {
  color: #111;
  font-weight: bold;
  background: #8aa9bf;
}

.tray {
  display: flex;
  align-items: center;
  gap: 6px;
  margin-left: auto;
  padding-right: 10px;
}

.lang {
  justify-content: center;
  width: 24px;
  height: 24px;
  font-size: 14px;
  border: 1px solid #7d9bb1;
  border-radius: 4px;
}

.clock {
  display: flex;
  flex-direction: column;
  align-items: center;
  padding-left: 9px;
  border-left: 1px solid #6b8ca5;
}

.clock b {
  font-size: 16px;
  font-weight: normal;
  line-height: 17px;
}

.clock span {
  font-size: 10px;
}
</style>
